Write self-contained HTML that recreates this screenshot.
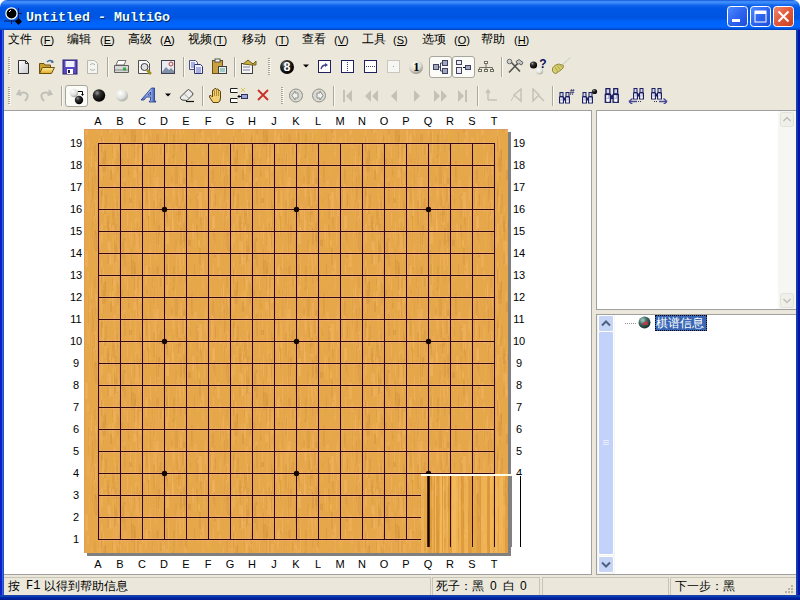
<!DOCTYPE html><html><head><meta charset="utf-8"><style>
*{margin:0;padding:0;box-sizing:border-box}
html,body{width:800px;height:600px;overflow:hidden;background:#fff;font-family:"Liberation Sans", sans-serif;}
.a{position:absolute}
#title{left:0;top:0;width:800px;height:30px;border-radius:7px 7px 0 0;
background:linear-gradient(to bottom,#0a3fc4 0px,#3d8cff 1px,#3a8af8 3px,#1466ee 5px,#0058e6 8px,#0054e0 18px,#0062f8 21px,#0066ff 27px,#0050da 29px,#003aa8 30px);}
#frame{left:0;top:30px;width:800px;height:570px;background:#0838c0;}
#client{left:4px;top:30px;width:792px;height:565px;background:#ebe8db;}
.menu{font-size:12px;color:#000;top:31px;line-height:16px;white-space:nowrap}
.lbl{font-size:11px;color:#000;line-height:14px;width:22px;text-align:center}
.rl{font-size:11px;color:#000;line-height:14px;width:30px}
.stat{font-size:12px;color:#000;line-height:14px;white-space:nowrap}
</style></head><body><svg width="0" height="0" style="position:absolute"><defs>
<radialGradient id="gb" cx="0.35" cy="0.3" r="0.7"><stop offset="0" stop-color="#9a9a9a"/><stop offset="0.35" stop-color="#303030"/><stop offset="1" stop-color="#000"/></radialGradient>
<radialGradient id="gw" cx="0.35" cy="0.3" r="0.75"><stop offset="0" stop-color="#fff"/><stop offset="0.6" stop-color="#e0e0dc"/><stop offset="1" stop-color="#a8a8a0"/></radialGradient>
<radialGradient id="gg" cx="0.4" cy="0.3" r="0.75"><stop offset="0" stop-color="#fafaf8"/><stop offset="0.6" stop-color="#dcdad0"/><stop offset="1" stop-color="#8c8a80"/></radialGradient>
<linearGradient id="minb" x1="0" y1="0" x2="1" y2="1"><stop offset="0" stop-color="#4f8cff"/><stop offset="0.5" stop-color="#2d65f0"/><stop offset="1" stop-color="#1d4cd8"/></linearGradient>
<linearGradient id="clsb" x1="0" y1="0" x2="1" y2="1"><stop offset="0" stop-color="#f08a70"/><stop offset="0.5" stop-color="#e2583a"/><stop offset="1" stop-color="#c84020"/></linearGradient>
<linearGradient id="fold" x1="0" y1="0" x2="0" y2="1"><stop offset="0" stop-color="#fff2a0"/><stop offset="1" stop-color="#e0a820"/></linearGradient>
<linearGradient id="pap" x1="0" y1="0" x2="1" y2="1"><stop offset="0" stop-color="#fff"/><stop offset="1" stop-color="#c8c8d0"/></linearGradient>
</defs></svg>
<div id="title" class="a"></div>
<div id="frame" class="a"></div>
<div class="a" style="left:0;top:30px;width:4px;height:570px;background:linear-gradient(to right,#0c1ec8 0,#0c1ec8 2px,#3464ee 2px,#3464ee 3px,#2050b8 3px)"></div>
<div class="a" style="left:796px;top:30px;width:4px;height:570px;background:linear-gradient(to right,#1c3ca8 0,#1c3ca8 1px,#0838b8 1px,#0838b8 2px,#0614a8 2px)"></div>
<div class="a" style="left:0;top:595px;width:800px;height:5px;background:linear-gradient(to bottom,#2040a8 0,#2040a8 1px,#0840b8 1px,#0840b8 2px,#0428a8 2px,#001c90 5px)"></div>
<div id="client" class="a"></div>
<svg class="a" style="left:0px;top:0px" width="26" height="28" viewBox="0 0 26 28"><line x1="4" y1="21" x2="21" y2="21" stroke="#0a1a50" stroke-width="1"/><line x1="11.5" y1="14" x2="11.5" y2="24" stroke="#0a1a50" stroke-width="1"/><line x1="18.5" y1="8" x2="18.5" y2="22" stroke="#0a1a50" stroke-width="1"/><line x1="12" y1="13.5" x2="22" y2="13.5" stroke="#0a1a50" stroke-width="1"/><circle cx="11.5" cy="13.5" r="5.6" fill="#000" stroke="#fff" stroke-width="1.2"/><line x1="9" y1="12" x2="11" y2="10" stroke="#fff" stroke-width="1"/><path d="M18.5 18 L22 21.5 L18.5 25 L15 21.5Z" fill="#000"/></svg>
<svg class="a" style="left:727px;top:6px" width="21" height="21" viewBox="0 0 21 21"><rect x="0.5" y="0.5" width="20" height="20" rx="3" fill="url(#minb)" stroke="#fff" stroke-width="1"/><rect x="5" y="13" width="8" height="3" fill="#fff"/></svg><svg class="a" style="left:750px;top:6px" width="21" height="21" viewBox="0 0 21 21"><rect x="0.5" y="0.5" width="20" height="20" rx="3" fill="url(#minb)" stroke="#fff" stroke-width="1"/><rect x="5" y="5" width="11" height="11" fill="none" stroke="#fff" stroke-width="1"/><rect x="5" y="5" width="11" height="3" fill="#fff"/></svg><svg class="a" style="left:773px;top:6px" width="21" height="21" viewBox="0 0 21 21"><rect x="0.5" y="0.5" width="20" height="20" rx="3" fill="url(#clsb)" stroke="#fff" stroke-width="1"/><path d="M5.5 5.5 L15.5 15.5 M15.5 5.5 L5.5 15.5" stroke="#fff" stroke-width="2"/></svg>
<div class="a" style="left:27px;top:11px;font:bold 13.33px 'Liberation Mono',monospace;color:#08205a;white-space:nowrap">Untitled - MultiGo</div>
<div class="a" style="left:26px;top:10px;font:bold 13.33px 'Liberation Mono',monospace;color:#e8ffff;white-space:nowrap">Untitled - MultiGo</div>
<div class="a menu" style="left:8px">文件</div>
<div class="a menu" style="left:40px;font-size:11px;top:32px">(F)</div>
<div class="a" style="left:44px;top:45px;width:8px;height:1px;background:#000"></div>
<div class="a menu" style="left:67px">编辑</div>
<div class="a menu" style="left:100px;font-size:11px;top:32px">(E)</div>
<div class="a" style="left:104px;top:45px;width:8px;height:1px;background:#000"></div>
<div class="a menu" style="left:128px">高级</div>
<div class="a menu" style="left:160px;font-size:11px;top:32px">(A)</div>
<div class="a" style="left:164px;top:45px;width:8px;height:1px;background:#000"></div>
<div class="a menu" style="left:188px">视频</div>
<div class="a menu" style="left:213px;font-size:11px;top:32px">(T)</div>
<div class="a" style="left:217px;top:45px;width:8px;height:1px;background:#000"></div>
<div class="a menu" style="left:242px">移动</div>
<div class="a menu" style="left:275px;font-size:11px;top:32px">(T)</div>
<div class="a" style="left:279px;top:45px;width:8px;height:1px;background:#000"></div>
<div class="a menu" style="left:302px">查看</div>
<div class="a menu" style="left:334px;font-size:11px;top:32px">(V)</div>
<div class="a" style="left:338px;top:45px;width:8px;height:1px;background:#000"></div>
<div class="a menu" style="left:362px">工具</div>
<div class="a menu" style="left:393px;font-size:11px;top:32px">(S)</div>
<div class="a" style="left:397px;top:45px;width:8px;height:1px;background:#000"></div>
<div class="a menu" style="left:422px">选项</div>
<div class="a menu" style="left:454px;font-size:11px;top:32px">(O)</div>
<div class="a" style="left:458px;top:45px;width:8px;height:1px;background:#000"></div>
<div class="a menu" style="left:481px">帮助</div>
<div class="a menu" style="left:514px;font-size:11px;top:32px">(H)</div>
<div class="a" style="left:518px;top:45px;width:8px;height:1px;background:#000"></div>
<svg class="a" style="left:8px;top:57px" width="3" height="18" viewBox="0 0 3 18"><rect x="0" y="0" width="2" height="1" fill="#a8a490"/><rect x="1" y="1" width="2" height="1" fill="#fff"/><rect x="0" y="2" width="2" height="1" fill="#a8a490"/><rect x="1" y="3" width="2" height="1" fill="#fff"/><rect x="0" y="4" width="2" height="1" fill="#a8a490"/><rect x="1" y="5" width="2" height="1" fill="#fff"/><rect x="0" y="6" width="2" height="1" fill="#a8a490"/><rect x="1" y="7" width="2" height="1" fill="#fff"/><rect x="0" y="8" width="2" height="1" fill="#a8a490"/><rect x="1" y="9" width="2" height="1" fill="#fff"/><rect x="0" y="10" width="2" height="1" fill="#a8a490"/><rect x="1" y="11" width="2" height="1" fill="#fff"/><rect x="0" y="12" width="2" height="1" fill="#a8a490"/><rect x="1" y="13" width="2" height="1" fill="#fff"/><rect x="0" y="14" width="2" height="1" fill="#a8a490"/><rect x="1" y="15" width="2" height="1" fill="#fff"/><rect x="0" y="16" width="2" height="1" fill="#a8a490"/><rect x="1" y="17" width="2" height="1" fill="#fff"/></svg><svg class="a" style="left:17px;top:59px" width="14" height="16" viewBox="0 0 14 16"><path d="M1.5 1.5 H8.5 L11.5 4.5 V14.5 H1.5Z" fill="url(#pap)" stroke="#303030"/><path d="M8.5 1.5 V4.5 H11.5" fill="none" stroke="#303030"/></svg><svg class="a" style="left:38px;top:59px" width="18" height="16" viewBox="0 0 18 16"><path d="M1.5 4.5 H6 L7 6 H12.5 V14.5 H1.5Z" fill="#c8a030" stroke="#705010"/><path d="M1.5 14.5 L4.5 8.5 H16.5 L13.5 14.5Z" fill="url(#fold)" stroke="#705010"/><path d="M9 3 Q12 0 15 3" fill="none" stroke="#3a6a90" stroke-width="1.2"/><path d="M14 1 L16 3.5 L13 4Z" fill="#3a6a90"/></svg><svg class="a" style="left:62px;top:59px" width="16" height="16" viewBox="0 0 16 16"><rect x="1" y="1" width="14" height="14" fill="#5a48c0" stroke="#2a2070"/><rect x="3.5" y="2" width="9" height="6" fill="#f0f0f8"/><rect x="5" y="10" width="6" height="5" fill="#fff"/><rect x="6" y="11" width="2" height="3" fill="#201850"/></svg><svg class="a" style="left:86px;top:59px" width="13" height="16" viewBox="0 0 13 16"><path d="M1.5 1.5 H8.5 L11.5 4.5 V14.5 H1.5Z" fill="#f4f4f0" stroke="#b8b8b0"/><path d="M4 6 A3 3 0 0 1 9 6 M9 10 A3 3 0 0 1 4 10" fill="none" stroke="#b0b0a8"/></svg><div class="a" style="left:107px;top:57px;width:1px;height:20px;background:#aca899"></div><div class="a" style="left:108px;top:57px;width:1px;height:20px;background:#fafaf6"></div><svg class="a" style="left:113px;top:59px" width="17" height="16" viewBox="0 0 17 16"><path d="M5 1.5 H13 L11 6 H3Z" fill="#fff" stroke="#707070"/><path d="M1.5 6.5 H15.5 V13.5 H1.5Z" fill="#d8d8d8" stroke="#606060"/><rect x="2" y="10" width="13" height="2" fill="#b0b0b0"/><rect x="10" y="8.5" width="3" height="3" fill="#30b040"/></svg><svg class="a" style="left:137px;top:59px" width="17" height="16" viewBox="0 0 17 16"><path d="M1.5 1.5 H9.5 L12.5 4.5 V14.5 H1.5Z" fill="#f8f8f8" stroke="#505050"/><circle cx="7.5" cy="8" r="3.5" fill="#e0e0e0" stroke="#404040"/><path d="M10 11 L14 15" stroke="#a09020" stroke-width="2.5"/></svg><svg class="a" style="left:160px;top:59px" width="16" height="16" viewBox="0 0 16 16"><rect x="1.5" y="1.5" width="13" height="13" fill="#e8ecf0" stroke="#404050"/><path d="M2 13 L6 8 L9 11 L11 9 L14 12 V14 H2Z" fill="#8090a8"/><circle cx="11" cy="5" r="2" fill="none" stroke="#c04040"/></svg><div class="a" style="left:183px;top:57px;width:1px;height:20px;background:#aca899"></div><div class="a" style="left:184px;top:57px;width:1px;height:20px;background:#fafaf6"></div><svg class="a" style="left:188px;top:59px" width="17" height="16" viewBox="0 0 17 16"><path d="M1.5 1.5 H7.5 L9.5 3.5 V10.5 H1.5Z" fill="#f0f0ff" stroke="#505080"/><path d="M6.5 5.5 H12.5 L14.5 7.5 V14.5 H6.5Z" fill="#f0f0ff" stroke="#303070"/><path d="M8 9 H13 M8 11 H13 M8 13 H13" stroke="#6070c0"/><path d="M3 4 H7 M3 6 H7 M3 8 H6" stroke="#6070c0"/></svg><svg class="a" style="left:211px;top:58px" width="18" height="17" viewBox="0 0 18 17"><rect x="1.5" y="2.5" width="10" height="13" fill="#c8a040" stroke="#6a5020"/><rect x="4" y="1" width="5" height="3" fill="#fff" stroke="#505050"/><rect x="7.5" y="8.5" width="8" height="7" fill="#e0f0e8" stroke="#404040"/><path d="M9 11 H14 M9 13 H14" stroke="#60a0a0"/></svg><div class="a" style="left:234px;top:57px;width:1px;height:20px;background:#aca899"></div><div class="a" style="left:235px;top:57px;width:1px;height:20px;background:#fafaf6"></div><svg class="a" style="left:240px;top:58px" width="17" height="17" viewBox="0 0 17 17"><rect x="1.5" y="5.5" width="11" height="10" fill="#f4f4f4" stroke="#404040"/><path d="M3 9 H10 M3 12 H10" stroke="#8080a0"/><path d="M3 6 L8 2 L13 6 L16 3 V7 H12Z" fill="#c8b040" stroke="#706020"/></svg><svg class="a" style="left:268px;top:58px" width="3" height="17" viewBox="0 0 3 17"><rect x="0" y="0" width="2" height="1" fill="#a8a490"/><rect x="1" y="1" width="2" height="1" fill="#fff"/><rect x="0" y="2" width="2" height="1" fill="#a8a490"/><rect x="1" y="3" width="2" height="1" fill="#fff"/><rect x="0" y="4" width="2" height="1" fill="#a8a490"/><rect x="1" y="5" width="2" height="1" fill="#fff"/><rect x="0" y="6" width="2" height="1" fill="#a8a490"/><rect x="1" y="7" width="2" height="1" fill="#fff"/><rect x="0" y="8" width="2" height="1" fill="#a8a490"/><rect x="1" y="9" width="2" height="1" fill="#fff"/><rect x="0" y="10" width="2" height="1" fill="#a8a490"/><rect x="1" y="11" width="2" height="1" fill="#fff"/><rect x="0" y="12" width="2" height="1" fill="#a8a490"/><rect x="1" y="13" width="2" height="1" fill="#fff"/><rect x="0" y="14" width="2" height="1" fill="#a8a490"/><rect x="1" y="15" width="2" height="1" fill="#fff"/><rect x="0" y="16" width="2" height="1" fill="#a8a490"/><rect x="1" y="17" width="2" height="1" fill="#fff"/></svg><svg class="a" style="left:279px;top:59px" width="16" height="16" viewBox="0 0 16 16"><circle cx="8" cy="8" r="7" fill="url(#gb)"/><text x="8" y="12.3" font-family="Liberation Sans" font-weight="bold" font-size="12.5" fill="#fff" text-anchor="middle">8</text></svg><svg class="a" style="left:303px;top:64px" width="7" height="5" viewBox="0 0 7 5"><path d="M0 0.5 H6 L3 3.5Z" fill="#000"/></svg><svg class="a" style="left:317px;top:59px" width="15" height="16" viewBox="0 0 15 16"><rect x="1.5" y="1.5" width="12" height="12" fill="#fff" stroke="#202060"/><path d="M4 10 Q5 6 9 6" fill="none" stroke="#404090" stroke-width="1.3"/><path d="M8 4 L11 6 L8 8Z" fill="#404090"/></svg><svg class="a" style="left:340px;top:59px" width="15" height="16" viewBox="0 0 15 16"><rect x="1.5" y="1.5" width="12" height="12" fill="#fff" stroke="#202060"/><path d="M7.5 3 V12" stroke="#404070" stroke-dasharray="1 1"/></svg><svg class="a" style="left:363px;top:59px" width="15" height="16" viewBox="0 0 15 16"><rect x="1.5" y="1.5" width="12" height="12" fill="#fff" stroke="#202060"/><path d="M3 7.5 H12" stroke="#404070" stroke-dasharray="1 1"/></svg><svg class="a" style="left:386px;top:59px" width="15" height="16" viewBox="0 0 15 16"><rect x="1.5" y="1.5" width="12" height="12" fill="#f6f6f2" stroke="#c8c8c0"/><rect x="7" y="7" width="1" height="1" fill="#a0a0a0"/></svg><svg class="a" style="left:408px;top:59px" width="16" height="16" viewBox="0 0 16 16"><circle cx="8" cy="8" r="7" fill="url(#gg)"/><text x="8.3" y="12" font-family="Liberation Serif" font-weight="bold" font-size="12.5" fill="#000" text-anchor="middle">1</text></svg><div class="a" style="left:429px;top:56px;width:23px;height:22px;border:1px solid #a8a69a;border-radius:3px;background:#fbfbf8"></div><div class="a" style="left:452px;top:56px;width:23px;height:22px;border:1px solid #a8a69a;border-radius:3px;background:#fbfbf8"></div><svg class="a" style="left:432px;top:59px" width="17" height="16" viewBox="0 0 17 16"><rect x="1.5" y="5.5" width="5" height="5" fill="#a0a8c0" stroke="#404060"/><rect x="10.5" y="1.5" width="5" height="5" fill="#a0a8c0" stroke="#404060"/><rect x="10.5" y="9.5" width="5" height="5" fill="#a0a8c0" stroke="#404060"/><path d="M6.5 8 H8.5 V4 H10.5 M8.5 8 V12 H10.5" fill="none" stroke="#404060"/></svg><svg class="a" style="left:455px;top:59px" width="17" height="16" viewBox="0 0 17 16"><rect x="1.5" y="1.5" width="5" height="4" fill="#e8e8f0" stroke="#404060"/><rect x="1.5" y="8.5" width="5" height="6" fill="#e8e8f0" stroke="#404060"/><rect x="10.5" y="6.5" width="5" height="4" fill="#a0a8c0" stroke="#404060"/><path d="M8 8.5 H10" stroke="#000"/></svg><svg class="a" style="left:477px;top:59px" width="18" height="16" viewBox="0 0 18 16"><rect x="7.5" y="2.5" width="3" height="2" fill="#fff" stroke="#707060"/><path d="M9 5 V8 M2.5 8.5 H15.5 M2.5 8.5 V10 M9 8.5 V10 M15.5 8.5 V10" fill="none" stroke="#707060"/><rect x="1.5" y="10.5" width="3" height="2" fill="#fff" stroke="#707060"/><rect x="7.5" y="10.5" width="3" height="2" fill="#fff" stroke="#707060"/><rect x="13.5" y="10.5" width="3" height="2" fill="#fff" stroke="#707060"/></svg><div class="a" style="left:501px;top:57px;width:1px;height:20px;background:#aca899"></div><div class="a" style="left:502px;top:57px;width:1px;height:20px;background:#fafaf6"></div><svg class="a" style="left:506px;top:58px" width="18" height="16" viewBox="0 0 18 16"><path d="M3 14.5 L13 4" stroke="#505050" stroke-width="1.6"/><path d="M4 3 L14 13.5" stroke="#505050" stroke-width="1.6"/><circle cx="3.5" cy="3.5" r="2.3" fill="#d0d0d0" stroke="#505050" stroke-width="0.8"/><path d="M10 3.5 L13 1.5 L17 4.5 L15.5 7 L13 5.5 L12 6.5Z" fill="#c8c8c8" stroke="#404040" stroke-width="0.8"/></svg><svg class="a" style="left:528px;top:57px" width="19" height="18" viewBox="0 0 19 18"><circle cx="5.5" cy="8" r="3.6" fill="url(#gb)"/><circle cx="11.5" cy="14" r="3.6" fill="url(#gw)"/><text x="15" y="10.5" font-family="Liberation Sans" font-weight="bold" font-size="12" fill="#0c0c60" text-anchor="middle">?</text></svg><svg class="a" style="left:551px;top:56px" width="21" height="19" viewBox="0 0 21 19"><path d="M11 9 L19.5 1.5" stroke="#e8e8e0" stroke-width="2.2"/><path d="M11 9 L19.5 1.5" stroke="#b0b0a0" stroke-width="0.6"/><path d="M1.5 12 Q4 8 8 8 L12.5 9.5 Q13 12 10 14 L5 17.5 Q2.5 17.5 1.5 15Z" fill="#d8d070" stroke="#807830" stroke-width="0.8"/><path d="M4 11 L7 16 M6 9.5 L9.5 14 M8.5 9 L11.5 12" stroke="#a09838" stroke-width="0.8"/></svg>
<svg class="a" style="left:8px;top:87px" width="3" height="18" viewBox="0 0 3 18"><rect x="0" y="0" width="2" height="1" fill="#a8a490"/><rect x="1" y="1" width="2" height="1" fill="#fff"/><rect x="0" y="2" width="2" height="1" fill="#a8a490"/><rect x="1" y="3" width="2" height="1" fill="#fff"/><rect x="0" y="4" width="2" height="1" fill="#a8a490"/><rect x="1" y="5" width="2" height="1" fill="#fff"/><rect x="0" y="6" width="2" height="1" fill="#a8a490"/><rect x="1" y="7" width="2" height="1" fill="#fff"/><rect x="0" y="8" width="2" height="1" fill="#a8a490"/><rect x="1" y="9" width="2" height="1" fill="#fff"/><rect x="0" y="10" width="2" height="1" fill="#a8a490"/><rect x="1" y="11" width="2" height="1" fill="#fff"/><rect x="0" y="12" width="2" height="1" fill="#a8a490"/><rect x="1" y="13" width="2" height="1" fill="#fff"/><rect x="0" y="14" width="2" height="1" fill="#a8a490"/><rect x="1" y="15" width="2" height="1" fill="#fff"/><rect x="0" y="16" width="2" height="1" fill="#a8a490"/><rect x="1" y="17" width="2" height="1" fill="#fff"/></svg><svg class="a" style="left:16px;top:88px" width="15" height="15" viewBox="0 0 15 15"><path d="M4 2 L1.5 6 L5.5 7 M2.5 6 Q8 3 11 6 Q13 9 9 13" fill="none" stroke="#c0c0b8" stroke-width="2"/></svg><svg class="a" style="left:38px;top:88px" width="15" height="15" viewBox="0 0 15 15"><path d="M11 2 L13.5 6 L9.5 7 M12.5 6 Q7 3 4 6 Q2 9 6 13" fill="none" stroke="#c0c0b8" stroke-width="2"/></svg><div class="a" style="left:61px;top:86px;width:1px;height:20px;background:#aca899"></div><div class="a" style="left:62px;top:86px;width:1px;height:20px;background:#fafaf6"></div><div class="a" style="left:65px;top:85px;width:23px;height:22px;border:1px solid #a8a69a;border-radius:3px;background:#fbfbf8"></div><svg class="a" style="left:67px;top:87px" width="19" height="18" viewBox="0 0 19 18"><circle cx="7" cy="6" r="4.2" fill="url(#gw)"/><circle cx="12" cy="13" r="4.2" fill="url(#gb)"/><path d="M11 4.5 H15.5 V8" fill="none" stroke="#000"/><path d="M14 7 L15.5 9 L17 7Z" fill="#000"/></svg><svg class="a" style="left:91px;top:88px" width="16" height="15" viewBox="0 0 16 15"><circle cx="8" cy="7.5" r="6.2" fill="url(#gb)"/></svg><svg class="a" style="left:114px;top:88px" width="16" height="15" viewBox="0 0 16 15"><circle cx="8" cy="7.5" r="6" fill="url(#gw)"/></svg><svg class="a" style="left:140px;top:87px" width="18" height="17" viewBox="0 0 18 17"><defs><linearGradient id="ag" x1="0" y1="0" x2="1" y2="0"><stop offset="0" stop-color="#5070d0"/><stop offset="0.6" stop-color="#a0b8f8"/><stop offset="1" stop-color="#2040a0"/></linearGradient></defs><path d="M1 13 L4 13 L6.5 10 H10.5 V13 L9 15 H16 L14.5 13 V1 H11.5 Z M8 8 L10.5 5 V8Z" fill="url(#ag)" stroke="#203880" stroke-width="0.8" fill-rule="evenodd"/></svg><svg class="a" style="left:165px;top:93px" width="7" height="5" viewBox="0 0 7 5"><path d="M0 0.5 H6 L3 3.5Z" fill="#000"/></svg><svg class="a" style="left:179px;top:88px" width="17" height="15" viewBox="0 0 17 15"><path d="M3 12 L1.5 10.5 Q1 9.5 2 8.5 L8.5 2 Q9.5 1 10.5 2 L13.5 5 Q14.5 6 13.5 7 L8 12.5 Z" fill="#ececec" stroke="#404040" stroke-width="1"/><path d="M5 5.5 L10 10.5" stroke="#a0a0a0"/><path d="M7 13.5 H15" stroke="#101010" stroke-width="1.2"/></svg><div class="a" style="left:202px;top:86px;width:1px;height:20px;background:#aca899"></div><div class="a" style="left:203px;top:86px;width:1px;height:20px;background:#fafaf6"></div><svg class="a" style="left:208px;top:87px" width="17" height="17" viewBox="0 0 17 17"><path d="M5 15.5 L1.5 10 Q1 8 3 8.5 L4.5 10 V4 Q4.5 2.5 6 3 V2.5 Q6.5 1 8 1.5 L8.5 2.5 Q9.5 1.5 10.5 2.5 V3.5 Q12 3 12.5 4.5 V11 Q12.5 15 10 15.5Z" fill="#f0d070" stroke="#604010" stroke-width="1"/><path d="M6.5 3.5 V9 M8.5 2.5 V9 M10.5 3.5 V9" stroke="#a07820" stroke-width="0.8"/></svg><svg class="a" style="left:229px;top:87px" width="20" height="17" viewBox="0 0 20 17"><path d="M8.5 1.5 H1.5 V5.5 H8.5" fill="none" stroke="#202020"/><path d="M8.5 11.5 H1.5 V15.5 H8.5" fill="none" stroke="#202020"/><rect x="2" y="2" width="6" height="3" fill="#fff"/><rect x="2" y="12" width="6" height="3" fill="#fff"/><rect x="12.5" y="7.5" width="6" height="4" fill="#98a8d8" stroke="#303060"/><path d="M9 9.5 H12" stroke="#000"/><path d="M9 9.5 L10.5 8 M9 9.5 L10.5 11" stroke="#000"/><path d="M12 1 L14 3 M16 1 L14 3 M12 5 L14 3 M16 5 L14 3" stroke="#d8c860" stroke-width="1"/></svg><svg class="a" style="left:256px;top:88px" width="14" height="14" viewBox="0 0 14 14"><path d="M2 2 L12 12 M12 2 L2 12" stroke="#c83028" stroke-width="1.8"/></svg><svg class="a" style="left:281px;top:87px" width="3" height="17" viewBox="0 0 3 17"><rect x="0" y="0" width="2" height="1" fill="#a8a490"/><rect x="1" y="1" width="2" height="1" fill="#fff"/><rect x="0" y="2" width="2" height="1" fill="#a8a490"/><rect x="1" y="3" width="2" height="1" fill="#fff"/><rect x="0" y="4" width="2" height="1" fill="#a8a490"/><rect x="1" y="5" width="2" height="1" fill="#fff"/><rect x="0" y="6" width="2" height="1" fill="#a8a490"/><rect x="1" y="7" width="2" height="1" fill="#fff"/><rect x="0" y="8" width="2" height="1" fill="#a8a490"/><rect x="1" y="9" width="2" height="1" fill="#fff"/><rect x="0" y="10" width="2" height="1" fill="#a8a490"/><rect x="1" y="11" width="2" height="1" fill="#fff"/><rect x="0" y="12" width="2" height="1" fill="#a8a490"/><rect x="1" y="13" width="2" height="1" fill="#fff"/><rect x="0" y="14" width="2" height="1" fill="#a8a490"/><rect x="1" y="15" width="2" height="1" fill="#fff"/><rect x="0" y="16" width="2" height="1" fill="#a8a490"/><rect x="1" y="17" width="2" height="1" fill="#fff"/></svg><svg class="a" style="left:288px;top:88px" width="16" height="15" viewBox="0 0 16 15"><circle cx="8" cy="7.5" r="6.5" fill="#d8d8d4" stroke="#909088"/><path d="M10 5 H7 V3 L4 7.5 L7 12 V10 H10Z" fill="#f0f0ec" stroke="#909088"/></svg><svg class="a" style="left:311px;top:88px" width="16" height="15" viewBox="0 0 16 15"><circle cx="8" cy="7.5" r="6.5" fill="#d8d8d4" stroke="#909088"/><path d="M6 5 H9 V3 L12 7.5 L9 12 V10 H6Z" fill="#f0f0ec" stroke="#909088"/></svg><div class="a" style="left:333px;top:86px;width:1px;height:20px;background:#aca899"></div><div class="a" style="left:334px;top:86px;width:1px;height:20px;background:#fafaf6"></div><svg class="a" style="left:342px;top:89px" width="11" height="14" viewBox="0 0 11 14"><rect x="1" y="1" width="2" height="12" fill="#c4c2b6"/><path d="M10 1 L4 7 L10 13Z" fill="#c4c2b6"/></svg><svg class="a" style="left:364px;top:89px" width="15" height="14" viewBox="0 0 15 14"><path d="M7 1 L1 7 L7 13Z M14 1 L8 7 L14 13Z" fill="#c4c2b6"/></svg><svg class="a" style="left:390px;top:89px" width="8" height="14" viewBox="0 0 8 14"><path d="M7 1 L1 7 L7 13Z" fill="#c4c2b6"/></svg><svg class="a" style="left:413px;top:89px" width="8" height="14" viewBox="0 0 8 14"><path d="M1 1 L7 7 L1 13Z" fill="#c4c2b6"/></svg><svg class="a" style="left:433px;top:89px" width="15" height="14" viewBox="0 0 15 14"><path d="M1 1 L7 7 L1 13Z M8 1 L14 7 L8 13Z" fill="#c4c2b6"/></svg><svg class="a" style="left:457px;top:89px" width="12" height="14" viewBox="0 0 12 14"><path d="M1 1 L7 7 L1 13Z" fill="#c4c2b6"/><rect x="8" y="1" width="2" height="12" fill="#c4c2b6"/></svg><div class="a" style="left:477px;top:86px;width:1px;height:20px;background:#aca899"></div><div class="a" style="left:478px;top:86px;width:1px;height:20px;background:#fafaf6"></div><svg class="a" style="left:485px;top:88px" width="14" height="15" viewBox="0 0 14 15"><path d="M3 12 V3 M1 5 L3 2 L5 5 M3 12 H12" fill="none" stroke="#c4c2b6" stroke-width="1.5"/></svg><svg class="a" style="left:509px;top:88px" width="14" height="15" viewBox="0 0 14 15"><path d="M12 1 L5 7 L12 13Z" fill="none" stroke="#c4c2b6" stroke-width="1.5"/><path d="M5 8 L2 13" stroke="#c4c2b6"/></svg><svg class="a" style="left:531px;top:88px" width="15" height="15" viewBox="0 0 15 15"><path d="M2 1 L8 7 L2 13Z" fill="none" stroke="#c4c2b6" stroke-width="1.5"/><path d="M8 8 L13 13" stroke="#c4c2b6" stroke-width="1.5"/></svg><div class="a" style="left:552px;top:86px;width:1px;height:20px;background:#aca899"></div><div class="a" style="left:553px;top:86px;width:1px;height:20px;background:#fafaf6"></div><svg class="a" style="left:558px;top:88px" width="18" height="16" viewBox="0 0 18 16"><g transform="translate(1,4.5)"><rect x="1" y="0" width="3" height="4" fill="#d0d4e8" stroke="#1c2060" stroke-width="1"/><rect x="7" y="0" width="3" height="4" fill="#d0d4e8" stroke="#1c2060" stroke-width="1"/><rect x="0.5" y="4.5" width="4" height="6" fill="#b8bcd8" stroke="#1c2060"/><rect x="6.5" y="4.5" width="4" height="6" fill="#b8bcd8" stroke="#1c2060"/><rect x="1.5" y="8" width="2" height="2" fill="#fff"/><rect x="7.5" y="8" width="2" height="2" fill="#fff"/><rect x="1.5" y="5" width="1" height="2" fill="#fff"/><rect x="7.5" y="5" width="1" height="2" fill="#fff"/><rect x="4.5" y="5" width="2" height="3" fill="#1c2060"/></g><text x="14" y="7" font-family="Liberation Sans" font-weight="bold" font-size="9" fill="#1c2060" text-anchor="middle">#</text></svg><svg class="a" style="left:581px;top:88px" width="18" height="16" viewBox="0 0 18 16"><g transform="translate(1,4.5)"><rect x="1" y="0" width="3" height="4" fill="#d0d4e8" stroke="#1c2060" stroke-width="1"/><rect x="7" y="0" width="3" height="4" fill="#d0d4e8" stroke="#1c2060" stroke-width="1"/><rect x="0.5" y="4.5" width="4" height="6" fill="#b8bcd8" stroke="#1c2060"/><rect x="6.5" y="4.5" width="4" height="6" fill="#b8bcd8" stroke="#1c2060"/><rect x="1.5" y="8" width="2" height="2" fill="#fff"/><rect x="7.5" y="8" width="2" height="2" fill="#fff"/><rect x="1.5" y="5" width="1" height="2" fill="#fff"/><rect x="7.5" y="5" width="1" height="2" fill="#fff"/><rect x="4.5" y="5" width="2" height="3" fill="#1c2060"/></g><circle cx="13.5" cy="3.5" r="2.6" fill="url(#gb)"/></svg><svg class="a" style="left:604px;top:88px" width="18" height="16" viewBox="0 0 18 16"><g transform="scale(1.3)"><g transform="translate(0.5,0.5)"><rect x="1" y="0" width="3" height="4" fill="#d0d4e8" stroke="#1c2060" stroke-width="1"/><rect x="7" y="0" width="3" height="4" fill="#d0d4e8" stroke="#1c2060" stroke-width="1"/><rect x="0.5" y="4.5" width="4" height="6" fill="#b8bcd8" stroke="#1c2060"/><rect x="6.5" y="4.5" width="4" height="6" fill="#b8bcd8" stroke="#1c2060"/><rect x="1.5" y="8" width="2" height="2" fill="#fff"/><rect x="7.5" y="8" width="2" height="2" fill="#fff"/><rect x="1.5" y="5" width="1" height="2" fill="#fff"/><rect x="7.5" y="5" width="1" height="2" fill="#fff"/><rect x="4.5" y="5" width="2" height="3" fill="#1c2060"/></g></g></svg><svg class="a" style="left:628px;top:86px" width="18" height="18" viewBox="0 0 18 18"><g transform="translate(5,2.5)"><rect x="1" y="0" width="3" height="4" fill="#d0d4e8" stroke="#1c2060" stroke-width="1"/><rect x="7" y="0" width="3" height="4" fill="#d0d4e8" stroke="#1c2060" stroke-width="1"/><rect x="0.5" y="4.5" width="4" height="6" fill="#b8bcd8" stroke="#1c2060"/><rect x="6.5" y="4.5" width="4" height="6" fill="#b8bcd8" stroke="#1c2060"/><rect x="1.5" y="8" width="2" height="2" fill="#fff"/><rect x="7.5" y="8" width="2" height="2" fill="#fff"/><rect x="1.5" y="5" width="1" height="2" fill="#fff"/><rect x="7.5" y="5" width="1" height="2" fill="#fff"/><rect x="4.5" y="5" width="2" height="3" fill="#1c2060"/></g><path d="M2 15.5 H9" stroke="#4a4a9a" stroke-width="1.5"/><path d="M1 15.5 L4.5 12.5 M1 15.5 L4.5 18.5" stroke="#4a4a9a" stroke-width="1.5"/><rect x="10" y="15" width="1" height="1" fill="#303050"/><rect x="12" y="15" width="1" height="1" fill="#303050"/></svg><svg class="a" style="left:650px;top:86px" width="18" height="18" viewBox="0 0 18 18"><g transform="translate(1,2.5)"><rect x="1" y="0" width="3" height="4" fill="#d0d4e8" stroke="#1c2060" stroke-width="1"/><rect x="7" y="0" width="3" height="4" fill="#d0d4e8" stroke="#1c2060" stroke-width="1"/><rect x="0.5" y="4.5" width="4" height="6" fill="#b8bcd8" stroke="#1c2060"/><rect x="6.5" y="4.5" width="4" height="6" fill="#b8bcd8" stroke="#1c2060"/><rect x="1.5" y="8" width="2" height="2" fill="#fff"/><rect x="7.5" y="8" width="2" height="2" fill="#fff"/><rect x="1.5" y="5" width="1" height="2" fill="#fff"/><rect x="7.5" y="5" width="1" height="2" fill="#fff"/><rect x="4.5" y="5" width="2" height="3" fill="#1c2060"/></g><path d="M9 15.5 H16" stroke="#4a4a9a" stroke-width="1.5"/><path d="M17 15.5 L13.5 12.5 M17 15.5 L13.5 18.5" stroke="#4a4a9a" stroke-width="1.5"/><rect x="4" y="15" width="1" height="1" fill="#303050"/><rect x="6" y="15" width="1" height="1" fill="#303050"/></svg>
<div class="a" style="left:4px;top:110px;width:588px;height:465px;background:#fff;border-top:1px solid #a0a0a0;border-right:1px solid #a0a0a0;border-bottom:1px solid #a0a0a0"></div>
<div class="a" style="left:596px;top:110px;width:200px;height:200px;background:#fff;border:1px solid #a0a0a0;border-right:0"></div>
<div class="a" style="left:596px;top:314px;width:200px;height:261px;background:#fff;border:1px solid #a0a0a0;border-right:0"></div>
<div class="a" style="left:778px;top:111px;width:18px;height:198px;background:#f6f6f2"></div>
<svg class="a" style="left:779px;top:111px" width="16" height="17" viewBox="0 0 16 17"><rect x="1.5" y="1.5" width="13" height="14" rx="2" fill="#f0f0ea" stroke="#e2e2da"/><path d="M4.5 10 L8 6.5 L11.5 10" fill="none" stroke="#c0c0b8" stroke-width="1.5"/></svg>
<svg class="a" style="left:779px;top:292px" width="16" height="17" viewBox="0 0 16 17"><rect x="1.5" y="1.5" width="13" height="14" rx="2" fill="#f0f0ea" stroke="#e2e2da"/><path d="M4.5 7 L8 10.5 L11.5 7" fill="none" stroke="#c0c0b8" stroke-width="1.5"/></svg>
<div class="a" style="left:597px;top:315px;width:18px;height:259px;background:#f4f4f0"></div>
<svg class="a" style="left:598px;top:315px" width="16" height="17" viewBox="0 0 16 17"><rect x="0.5" y="0.5" width="15" height="16" rx="1.5" fill="#c6d4f6" stroke="#fff"/><path d="M4 10.5 L8 6.5 L12 10.5" fill="none" stroke="#4d6185" stroke-width="2"/></svg>
<svg class="a" style="left:598px;top:331px" width="16" height="225" viewBox="0 0 16 225"><rect x="0.5" y="0.5" width="15" height="223" rx="1.5" fill="#c2d2fa" stroke="#fff"/><path d="M5 109.5 H11 M5 111.5 H11 M5 113.5 H11" stroke="#e8eefc"/></svg>
<svg class="a" style="left:598px;top:556px" width="16" height="18" viewBox="0 0 16 18"><rect x="0.5" y="0.5" width="15" height="16" rx="1.5" fill="#c6d4f6" stroke="#fff"/><path d="M4 6.5 L8 10.5 L12 6.5" fill="none" stroke="#4d6185" stroke-width="2"/></svg>
<svg class="a" style="left:624px;top:315px" width="30" height="16" viewBox="0 0 30 16"><defs><radialGradient id="tg" cx="0.35" cy="0.3" r="0.8"><stop offset="0" stop-color="#a8d0c8"/><stop offset="0.45" stop-color="#3a6660"/><stop offset="1" stop-color="#142424"/></radialGradient></defs><path d="M1 8.5 H12" stroke="#909090" stroke-dasharray="1 1"/><circle cx="20.5" cy="7.5" r="6" fill="url(#tg)"/><path d="M17.5 9.5 L23 5.5 L24 10Z" fill="#c83848"/></svg>
<div class="a" style="left:655px;top:315px;width:52px;height:16px;background:#3866b4;border:1px dotted #000"></div>
<div class="a stat" style="left:656px;top:316px;color:#fff;font-size:12px">棋谱信息</div>
<svg class="a" style="left:0;top:0" width="800" height="600"><defs><pattern id="wood" width="132" height="132" patternUnits="userSpaceOnUse" x="84" y="129"><rect width="132" height="132" fill="#e6a64a"/><rect x="115" y="119" width="3" height="17" fill="#d0903c" opacity="0.35"/><rect x="115" y="-13" width="3" height="17" fill="#d0903c" opacity="0.35"/><rect x="47" y="131" width="3" height="18" fill="#d0903c" opacity="0.4"/><rect x="47" y="-1" width="3" height="18" fill="#d0903c" opacity="0.4"/><rect x="24" y="77" width="1" height="7" fill="#f2b462" opacity="0.53"/><rect x="10" y="101" width="2" height="17" fill="#d0903c" opacity="0.35"/><rect x="40" y="3" width="2" height="19" fill="#f2b462" opacity="0.26"/><rect x="61" y="7" width="2" height="17" fill="#f2b462" opacity="0.46"/><rect x="50" y="59" width="2" height="23" fill="#f2b462" opacity="0.25"/><rect x="21" y="71" width="1" height="16" fill="#e4b040" opacity="0.6"/><rect x="21" y="65" width="2" height="13" fill="#d0903c" opacity="0.33"/><rect x="7" y="27" width="1" height="15" fill="#f2b462" opacity="0.35"/><rect x="17" y="0" width="1" height="9" fill="#f2b462" opacity="0.57"/><rect x="120" y="101" width="1" height="16" fill="#f2b462" opacity="0.47"/><rect x="69" y="22" width="1" height="12" fill="#f2b462" opacity="0.59"/><rect x="30" y="63" width="1" height="25" fill="#f2b462" opacity="0.27"/><rect x="124" y="48" width="1" height="17" fill="#d0903c" opacity="0.45"/><rect x="33" y="98" width="1" height="6" fill="#f2b462" opacity="0.6"/><rect x="0" y="77" width="1" height="3" fill="#f2b462" opacity="0.39"/><rect x="25" y="37" width="1" height="9" fill="#f2b462" opacity="0.25"/><rect x="84" y="75" width="3" height="15" fill="#f2b462" opacity="0.28"/><rect x="62" y="94" width="1" height="14" fill="#d0903c" opacity="0.23"/><rect x="123" y="34" width="3" height="15" fill="#f2b462" opacity="0.3"/><rect x="58" y="63" width="3" height="26" fill="#f2b462" opacity="0.51"/><rect x="50" y="99" width="2" height="18" fill="#d0903c" opacity="0.31"/><rect x="26" y="9" width="1" height="19" fill="#e4b040" opacity="0.37"/><rect x="100" y="107" width="1" height="22" fill="#d0903c" opacity="0.33"/><rect x="17" y="58" width="1" height="18" fill="#d0903c" opacity="0.41"/><rect x="18" y="54" width="1" height="9" fill="#d0903c" opacity="0.22"/><rect x="105" y="63" width="1" height="4" fill="#f2b462" opacity="0.35"/><rect x="33" y="92" width="1" height="7" fill="#e4b040" opacity="0.59"/><rect x="35" y="8" width="2" height="3" fill="#d0903c" opacity="0.29"/><rect x="79" y="5" width="1" height="22" fill="#d0903c" opacity="0.32"/><rect x="79" y="34" width="1" height="5" fill="#f2b462" opacity="0.44"/><rect x="11" y="33" width="2" height="13" fill="#f2b462" opacity="0.49"/><rect x="19" y="106" width="3" height="3" fill="#e4b040" opacity="0.47"/><rect x="97" y="3" width="1" height="22" fill="#f2b462" opacity="0.28"/><rect x="29" y="106" width="1" height="26" fill="#f2b462" opacity="0.58"/><rect x="117" y="118" width="1" height="20" fill="#f2b462" opacity="0.51"/><rect x="117" y="-14" width="1" height="20" fill="#f2b462" opacity="0.51"/><rect x="7" y="22" width="1" height="18" fill="#f2b462" opacity="0.59"/><rect x="28" y="124" width="1" height="11" fill="#e4b040" opacity="0.41"/><rect x="28" y="-8" width="1" height="11" fill="#e4b040" opacity="0.41"/><rect x="36" y="51" width="2" height="19" fill="#f2b462" opacity="0.57"/><rect x="113" y="61" width="1" height="13" fill="#f2b462" opacity="0.34"/><rect x="110" y="51" width="3" height="9" fill="#f2b462" opacity="0.45"/><rect x="81" y="34" width="1" height="7" fill="#d0903c" opacity="0.41"/><rect x="10" y="16" width="2" height="11" fill="#d0903c" opacity="0.23"/><rect x="120" y="54" width="1" height="16" fill="#f2b462" opacity="0.43"/><rect x="80" y="115" width="2" height="13" fill="#f2b462" opacity="0.26"/><rect x="10" y="71" width="2" height="21" fill="#f2b462" opacity="0.48"/><rect x="4" y="34" width="2" height="15" fill="#d0903c" opacity="0.21"/><rect x="68" y="36" width="1" height="4" fill="#e4b040" opacity="0.33"/><rect x="27" y="94" width="2" height="5" fill="#d0903c" opacity="0.25"/><rect x="121" y="45" width="1" height="25" fill="#f2b462" opacity="0.42"/><rect x="9" y="57" width="1" height="11" fill="#d0903c" opacity="0.33"/><rect x="128" y="40" width="2" height="15" fill="#d0903c" opacity="0.37"/><rect x="57" y="105" width="1" height="26" fill="#f2b462" opacity="0.41"/><rect x="50" y="1" width="2" height="15" fill="#d0903c" opacity="0.36"/><rect x="128" y="87" width="3" height="17" fill="#f2b462" opacity="0.59"/><rect x="25" y="31" width="2" height="9" fill="#f2b462" opacity="0.39"/><rect x="22" y="82" width="1" height="11" fill="#e4b040" opacity="0.56"/><rect x="89" y="21" width="2" height="4" fill="#f2b462" opacity="0.44"/><rect x="70" y="7" width="1" height="9" fill="#d0903c" opacity="0.22"/><rect x="8" y="85" width="1" height="24" fill="#d0903c" opacity="0.24"/><rect x="38" y="112" width="2" height="18" fill="#d0903c" opacity="0.37"/><rect x="56" y="74" width="1" height="26" fill="#d0903c" opacity="0.24"/><rect x="131" y="65" width="3" height="12" fill="#d0903c" opacity="0.44"/><rect x="53" y="36" width="1" height="20" fill="#d0903c" opacity="0.34"/><rect x="51" y="29" width="1" height="19" fill="#f2b462" opacity="0.38"/><rect x="11" y="102" width="2" height="20" fill="#d0903c" opacity="0.34"/><rect x="125" y="42" width="1" height="5" fill="#e4b040" opacity="0.44"/><rect x="103" y="63" width="1" height="18" fill="#d0903c" opacity="0.28"/><rect x="121" y="81" width="2" height="6" fill="#f2b462" opacity="0.47"/><rect x="66" y="5" width="1" height="4" fill="#f2b462" opacity="0.33"/><rect x="72" y="90" width="1" height="10" fill="#d0903c" opacity="0.23"/><rect x="31" y="130" width="3" height="22" fill="#f2b462" opacity="0.32"/><rect x="31" y="-2" width="3" height="22" fill="#f2b462" opacity="0.32"/><rect x="111" y="96" width="1" height="23" fill="#f2b462" opacity="0.44"/><rect x="40" y="52" width="2" height="23" fill="#d0903c" opacity="0.25"/><rect x="55" y="34" width="3" height="10" fill="#e4b040" opacity="0.49"/><rect x="88" y="80" width="1" height="22" fill="#f2b462" opacity="0.57"/><rect x="55" y="49" width="3" height="6" fill="#f2b462" opacity="0.33"/><rect x="22" y="99" width="1" height="6" fill="#f2b462" opacity="0.58"/><rect x="32" y="103" width="1" height="23" fill="#d0903c" opacity="0.2"/><rect x="51" y="91" width="2" height="14" fill="#f2b462" opacity="0.43"/><rect x="87" y="48" width="2" height="5" fill="#d0903c" opacity="0.21"/><rect x="131" y="123" width="2" height="7" fill="#f2b462" opacity="0.29"/><rect x="44" y="40" width="3" height="12" fill="#e4b040" opacity="0.33"/><rect x="15" y="118" width="1" height="5" fill="#d0903c" opacity="0.28"/><rect x="119" y="131" width="1" height="14" fill="#f2b462" opacity="0.46"/><rect x="119" y="-1" width="1" height="14" fill="#f2b462" opacity="0.46"/><rect x="3" y="10" width="2" height="9" fill="#f2b462" opacity="0.41"/><rect x="94" y="49" width="1" height="22" fill="#f2b462" opacity="0.43"/><rect x="3" y="21" width="1" height="25" fill="#e4b040" opacity="0.57"/><rect x="103" y="48" width="2" height="19" fill="#d0903c" opacity="0.29"/><rect x="66" y="29" width="1" height="26" fill="#d0903c" opacity="0.24"/><rect x="103" y="84" width="1" height="20" fill="#d0903c" opacity="0.39"/><rect x="46" y="52" width="1" height="26" fill="#f2b462" opacity="0.53"/><rect x="77" y="25" width="1" height="3" fill="#e4b040" opacity="0.6"/><rect x="12" y="69" width="1" height="24" fill="#f2b462" opacity="0.33"/><rect x="103" y="46" width="2" height="20" fill="#f2b462" opacity="0.43"/><rect x="127" y="54" width="2" height="25" fill="#f2b462" opacity="0.39"/><rect x="5" y="27" width="1" height="26" fill="#f2b462" opacity="0.41"/><rect x="129" y="50" width="1" height="23" fill="#f2b462" opacity="0.28"/><rect x="64" y="87" width="1" height="20" fill="#d0903c" opacity="0.3"/><rect x="25" y="113" width="2" height="23" fill="#f2b462" opacity="0.46"/><rect x="25" y="-19" width="2" height="23" fill="#f2b462" opacity="0.46"/><rect x="11" y="40" width="1" height="15" fill="#d0903c" opacity="0.24"/><rect x="126" y="14" width="2" height="16" fill="#e4b040" opacity="0.43"/><rect x="102" y="79" width="2" height="14" fill="#d0903c" opacity="0.32"/><rect x="69" y="72" width="2" height="24" fill="#d0903c" opacity="0.27"/><rect x="3" y="62" width="3" height="21" fill="#f2b462" opacity="0.3"/><rect x="99" y="80" width="1" height="26" fill="#f2b462" opacity="0.45"/><rect x="81" y="57" width="1" height="16" fill="#d0903c" opacity="0.26"/><rect x="62" y="25" width="1" height="26" fill="#e4b040" opacity="0.34"/><rect x="62" y="29" width="2" height="4" fill="#d0903c" opacity="0.31"/><rect x="52" y="13" width="3" height="14" fill="#d0903c" opacity="0.23"/><rect x="113" y="106" width="1" height="17" fill="#d0903c" opacity="0.36"/><rect x="107" y="35" width="1" height="12" fill="#d0903c" opacity="0.26"/><rect x="29" y="79" width="2" height="19" fill="#d0903c" opacity="0.29"/><rect x="69" y="48" width="2" height="23" fill="#f2b462" opacity="0.33"/><rect x="63" y="50" width="2" height="24" fill="#f2b462" opacity="0.27"/><rect x="69" y="108" width="1" height="3" fill="#d0903c" opacity="0.23"/><rect x="71" y="22" width="1" height="24" fill="#f2b462" opacity="0.33"/><rect x="95" y="122" width="1" height="14" fill="#f2b462" opacity="0.37"/><rect x="95" y="-10" width="1" height="14" fill="#f2b462" opacity="0.37"/><rect x="34" y="19" width="3" height="6" fill="#f2b462" opacity="0.54"/><rect x="54" y="108" width="1" height="26" fill="#f2b462" opacity="0.53"/><rect x="54" y="-24" width="1" height="26" fill="#f2b462" opacity="0.53"/><rect x="94" y="83" width="1" height="12" fill="#d0903c" opacity="0.39"/><rect x="47" y="94" width="1" height="21" fill="#f2b462" opacity="0.56"/><rect x="20" y="21" width="2" height="16" fill="#d0903c" opacity="0.32"/><rect x="118" y="2" width="1" height="5" fill="#f2b462" opacity="0.57"/><rect x="20" y="77" width="2" height="18" fill="#d0903c" opacity="0.37"/><rect x="72" y="56" width="1" height="14" fill="#d0903c" opacity="0.28"/><rect x="30" y="112" width="1" height="21" fill="#d0903c" opacity="0.43"/><rect x="30" y="-20" width="1" height="21" fill="#d0903c" opacity="0.43"/><rect x="71" y="78" width="1" height="17" fill="#f2b462" opacity="0.39"/><rect x="63" y="92" width="1" height="14" fill="#f2b462" opacity="0.49"/><rect x="99" y="49" width="3" height="26" fill="#d0903c" opacity="0.4"/><rect x="39" y="45" width="3" height="8" fill="#f2b462" opacity="0.41"/><rect x="72" y="5" width="3" height="10" fill="#d0903c" opacity="0.34"/><rect x="75" y="108" width="1" height="5" fill="#d0903c" opacity="0.28"/><rect x="21" y="20" width="1" height="11" fill="#d0903c" opacity="0.42"/><rect x="21" y="36" width="1" height="6" fill="#d0903c" opacity="0.36"/><rect x="62" y="56" width="2" height="18" fill="#d0903c" opacity="0.33"/><rect x="117" y="89" width="1" height="13" fill="#d0903c" opacity="0.28"/><rect x="34" y="124" width="1" height="20" fill="#d0903c" opacity="0.22"/><rect x="34" y="-8" width="1" height="20" fill="#d0903c" opacity="0.22"/><rect x="11" y="89" width="1" height="3" fill="#d0903c" opacity="0.41"/><rect x="118" y="6" width="2" height="19" fill="#f2b462" opacity="0.25"/><rect x="28" y="107" width="1" height="7" fill="#f2b462" opacity="0.31"/><rect x="96" y="42" width="2" height="13" fill="#f2b462" opacity="0.4"/><rect x="74" y="15" width="1" height="18" fill="#f2b462" opacity="0.29"/><rect x="39" y="45" width="3" height="4" fill="#d0903c" opacity="0.2"/><rect x="123" y="9" width="3" height="13" fill="#f2b462" opacity="0.31"/><rect x="55" y="60" width="2" height="22" fill="#d0903c" opacity="0.35"/><rect x="57" y="47" width="1" height="11" fill="#f2b462" opacity="0.57"/><rect x="79" y="122" width="2" height="11" fill="#d0903c" opacity="0.3"/><rect x="79" y="-10" width="2" height="11" fill="#d0903c" opacity="0.3"/><rect x="87" y="23" width="2" height="18" fill="#e4b040" opacity="0.42"/><rect x="55" y="98" width="1" height="19" fill="#d0903c" opacity="0.39"/><rect x="14" y="60" width="2" height="3" fill="#e4b040" opacity="0.57"/><rect x="115" y="63" width="3" height="25" fill="#f2b462" opacity="0.56"/><rect x="106" y="82" width="1" height="7" fill="#f2b462" opacity="0.55"/><rect x="33" y="68" width="2" height="19" fill="#d0903c" opacity="0.24"/><rect x="45" y="52" width="1" height="7" fill="#d0903c" opacity="0.22"/><rect x="69" y="24" width="2" height="18" fill="#d0903c" opacity="0.22"/><rect x="129" y="4" width="1" height="9" fill="#f2b462" opacity="0.57"/><rect x="23" y="112" width="3" height="9" fill="#f2b462" opacity="0.39"/><rect x="126" y="79" width="1" height="13" fill="#f2b462" opacity="0.28"/><rect x="78" y="17" width="1" height="14" fill="#f2b462" opacity="0.3"/><rect x="100" y="118" width="2" height="26" fill="#e4b040" opacity="0.55"/><rect x="100" y="-14" width="2" height="26" fill="#e4b040" opacity="0.55"/><rect x="113" y="96" width="1" height="25" fill="#d0903c" opacity="0.26"/><rect x="29" y="2" width="1" height="26" fill="#f2b462" opacity="0.47"/><rect x="74" y="96" width="2" height="20" fill="#d0903c" opacity="0.44"/><rect x="100" y="22" width="2" height="11" fill="#f2b462" opacity="0.38"/><rect x="28" y="79" width="1" height="11" fill="#d0903c" opacity="0.38"/><rect x="84" y="97" width="1" height="5" fill="#f2b462" opacity="0.47"/><rect x="33" y="45" width="2" height="8" fill="#f2b462" opacity="0.26"/><rect x="118" y="23" width="2" height="6" fill="#f2b462" opacity="0.3"/><rect x="31" y="104" width="1" height="5" fill="#f2b462" opacity="0.54"/><rect x="130" y="52" width="1" height="7" fill="#d0903c" opacity="0.3"/><rect x="84" y="3" width="1" height="26" fill="#f2b462" opacity="0.49"/><rect x="62" y="4" width="2" height="11" fill="#f2b462" opacity="0.37"/><rect x="112" y="96" width="1" height="9" fill="#d0903c" opacity="0.4"/><rect x="26" y="40" width="2" height="11" fill="#d0903c" opacity="0.43"/><rect x="59" y="128" width="1" height="19" fill="#f2b462" opacity="0.5"/><rect x="59" y="-4" width="1" height="19" fill="#f2b462" opacity="0.5"/><rect x="50" y="6" width="2" height="23" fill="#d0903c" opacity="0.39"/><rect x="34" y="122" width="1" height="21" fill="#f2b462" opacity="0.37"/><rect x="34" y="-10" width="1" height="21" fill="#f2b462" opacity="0.37"/><rect x="23" y="92" width="3" height="11" fill="#d0903c" opacity="0.23"/><rect x="34" y="16" width="1" height="20" fill="#e4b040" opacity="0.35"/><rect x="85" y="37" width="2" height="6" fill="#e4b040" opacity="0.3"/><rect x="93" y="92" width="1" height="8" fill="#f2b462" opacity="0.44"/><rect x="19" y="8" width="1" height="15" fill="#f2b462" opacity="0.6"/><rect x="35" y="97" width="1" height="22" fill="#d0903c" opacity="0.4"/><rect x="4" y="51" width="1" height="16" fill="#d0903c" opacity="0.24"/><rect x="98" y="103" width="1" height="8" fill="#f2b462" opacity="0.3"/><rect x="62" y="85" width="2" height="4" fill="#d0903c" opacity="0.21"/><rect x="37" y="127" width="1" height="22" fill="#f2b462" opacity="0.37"/><rect x="37" y="-5" width="1" height="22" fill="#f2b462" opacity="0.37"/><rect x="104" y="72" width="3" height="18" fill="#e4b040" opacity="0.44"/><rect x="104" y="111" width="3" height="6" fill="#d0903c" opacity="0.43"/><rect x="84" y="110" width="2" height="16" fill="#e4b040" opacity="0.4"/><rect x="13" y="110" width="1" height="26" fill="#f2b462" opacity="0.36"/><rect x="13" y="-22" width="1" height="26" fill="#f2b462" opacity="0.36"/><rect x="78" y="17" width="2" height="10" fill="#f2b462" opacity="0.41"/><rect x="128" y="101" width="3" height="4" fill="#d0903c" opacity="0.23"/><rect x="61" y="78" width="2" height="24" fill="#f2b462" opacity="0.33"/><rect x="17" y="94" width="2" height="20" fill="#f2b462" opacity="0.53"/><rect x="56" y="107" width="2" height="21" fill="#f2b462" opacity="0.28"/><rect x="33" y="116" width="1" height="3" fill="#f2b462" opacity="0.5"/><rect x="6" y="44" width="1" height="5" fill="#f2b462" opacity="0.41"/><rect x="101" y="91" width="1" height="25" fill="#d0903c" opacity="0.21"/><rect x="7" y="80" width="1" height="12" fill="#f2b462" opacity="0.3"/><rect x="120" y="51" width="1" height="12" fill="#e4b040" opacity="0.51"/><rect x="15" y="80" width="1" height="14" fill="#e4b040" opacity="0.3"/><rect x="51" y="60" width="2" height="9" fill="#e4b040" opacity="0.59"/><rect x="27" y="80" width="1" height="11" fill="#e4b040" opacity="0.51"/><rect x="34" y="113" width="1" height="16" fill="#f2b462" opacity="0.33"/><rect x="78" y="50" width="1" height="11" fill="#f2b462" opacity="0.33"/><rect x="75" y="69" width="3" height="14" fill="#d0903c" opacity="0.33"/><rect x="29" y="58" width="2" height="12" fill="#e4b040" opacity="0.35"/><rect x="57" y="33" width="1" height="23" fill="#d0903c" opacity="0.32"/><rect x="19" y="18" width="1" height="19" fill="#e4b040" opacity="0.3"/><rect x="72" y="64" width="2" height="16" fill="#d0903c" opacity="0.22"/><rect x="72" y="48" width="3" height="10" fill="#f2b462" opacity="0.51"/><rect x="7" y="38" width="1" height="4" fill="#d0903c" opacity="0.43"/><rect x="98" y="127" width="1" height="4" fill="#f2b462" opacity="0.44"/><rect x="92" y="123" width="1" height="4" fill="#d0903c" opacity="0.33"/><rect x="44" y="42" width="2" height="6" fill="#d0903c" opacity="0.26"/><rect x="112" y="65" width="2" height="25" fill="#d0903c" opacity="0.26"/><rect x="125" y="56" width="2" height="21" fill="#d0903c" opacity="0.27"/><rect x="51" y="13" width="2" height="21" fill="#f2b462" opacity="0.56"/><rect x="83" y="4" width="1" height="22" fill="#d0903c" opacity="0.31"/><rect x="113" y="67" width="2" height="3" fill="#f2b462" opacity="0.57"/><rect x="60" y="37" width="2" height="4" fill="#f2b462" opacity="0.26"/><rect x="80" y="67" width="3" height="21" fill="#d0903c" opacity="0.36"/><rect x="130" y="96" width="1" height="11" fill="#f2b462" opacity="0.42"/><rect x="116" y="80" width="1" height="16" fill="#d0903c" opacity="0.37"/><rect x="10" y="125" width="1" height="22" fill="#e4b040" opacity="0.34"/><rect x="10" y="-7" width="1" height="22" fill="#e4b040" opacity="0.34"/><rect x="116" y="10" width="2" height="3" fill="#f2b462" opacity="0.56"/><rect x="36" y="100" width="1" height="20" fill="#f2b462" opacity="0.4"/><rect x="19" y="58" width="1" height="12" fill="#f2b462" opacity="0.44"/><rect x="61" y="118" width="1" height="5" fill="#e4b040" opacity="0.41"/><rect x="86" y="55" width="2" height="4" fill="#f2b462" opacity="0.45"/><rect x="14" y="87" width="2" height="21" fill="#d0903c" opacity="0.42"/><rect x="45" y="100" width="1" height="9" fill="#f2b462" opacity="0.52"/><rect x="55" y="88" width="1" height="10" fill="#f2b462" opacity="0.44"/><rect x="41" y="52" width="1" height="15" fill="#f2b462" opacity="0.41"/><rect x="78" y="114" width="1" height="18" fill="#e4b040" opacity="0.5"/><rect x="124" y="98" width="1" height="16" fill="#f2b462" opacity="0.49"/><rect x="92" y="4" width="1" height="19" fill="#f2b462" opacity="0.34"/><rect x="100" y="55" width="2" height="11" fill="#f2b462" opacity="0.27"/><rect x="92" y="61" width="1" height="26" fill="#d0903c" opacity="0.23"/><rect x="82" y="98" width="3" height="17" fill="#f2b462" opacity="0.56"/><rect x="83" y="14" width="1" height="12" fill="#f2b462" opacity="0.33"/><rect x="10" y="38" width="1" height="19" fill="#d0903c" opacity="0.21"/><rect x="79" y="108" width="1" height="18" fill="#d0903c" opacity="0.23"/><rect x="66" y="115" width="1" height="24" fill="#f2b462" opacity="0.56"/><rect x="66" y="-17" width="1" height="24" fill="#f2b462" opacity="0.56"/><rect x="71" y="115" width="2" height="15" fill="#f2b462" opacity="0.43"/><rect x="91" y="26" width="1" height="12" fill="#f2b462" opacity="0.46"/><rect x="35" y="6" width="1" height="26" fill="#d0903c" opacity="0.34"/><rect x="76" y="17" width="2" height="9" fill="#d0903c" opacity="0.29"/><rect x="31" y="95" width="3" height="10" fill="#d0903c" opacity="0.26"/><rect x="109" y="100" width="1" height="18" fill="#f2b462" opacity="0.38"/><rect x="84" y="127" width="1" height="25" fill="#f2b462" opacity="0.31"/><rect x="84" y="-5" width="1" height="25" fill="#f2b462" opacity="0.31"/><rect x="103" y="121" width="1" height="8" fill="#f2b462" opacity="0.5"/><rect x="23" y="87" width="2" height="16" fill="#d0903c" opacity="0.32"/><rect x="65" y="78" width="2" height="25" fill="#e4b040" opacity="0.57"/><rect x="30" y="16" width="1" height="15" fill="#f2b462" opacity="0.38"/><rect x="76" y="83" width="1" height="11" fill="#f2b462" opacity="0.26"/><rect x="82" y="76" width="1" height="11" fill="#d0903c" opacity="0.42"/><rect x="120" y="87" width="1" height="14" fill="#f2b462" opacity="0.5"/><rect x="55" y="19" width="3" height="23" fill="#f2b462" opacity="0.44"/><rect x="106" y="70" width="1" height="5" fill="#d0903c" opacity="0.42"/><rect x="97" y="9" width="1" height="7" fill="#d0903c" opacity="0.27"/><rect x="126" y="121" width="1" height="3" fill="#f2b462" opacity="0.32"/><rect x="58" y="56" width="1" height="10" fill="#d0903c" opacity="0.43"/><rect x="100" y="61" width="1" height="20" fill="#d0903c" opacity="0.36"/><rect x="20" y="85" width="2" height="11" fill="#f2b462" opacity="0.56"/><rect x="80" y="53" width="3" height="25" fill="#f2b462" opacity="0.3"/><rect x="49" y="41" width="3" height="8" fill="#f2b462" opacity="0.49"/><rect x="75" y="106" width="1" height="12" fill="#f2b462" opacity="0.48"/><rect x="127" y="63" width="1" height="14" fill="#f2b462" opacity="0.31"/><rect x="131" y="32" width="2" height="5" fill="#e4b040" opacity="0.55"/><rect x="79" y="115" width="1" height="19" fill="#d0903c" opacity="0.32"/><rect x="79" y="-17" width="1" height="19" fill="#d0903c" opacity="0.32"/><rect x="41" y="105" width="2" height="18" fill="#f2b462" opacity="0.34"/><rect x="129" y="100" width="2" height="11" fill="#d0903c" opacity="0.26"/><rect x="83" y="85" width="1" height="9" fill="#d0903c" opacity="0.41"/><rect x="107" y="32" width="2" height="22" fill="#d0903c" opacity="0.27"/><rect x="41" y="51" width="1" height="15" fill="#d0903c" opacity="0.27"/><rect x="47" y="120" width="1" height="21" fill="#d0903c" opacity="0.4"/><rect x="47" y="-12" width="1" height="21" fill="#d0903c" opacity="0.4"/><rect x="34" y="69" width="1" height="16" fill="#f2b462" opacity="0.48"/><rect x="98" y="35" width="2" height="4" fill="#f2b462" opacity="0.6"/><rect x="10" y="73" width="1" height="14" fill="#d0903c" opacity="0.45"/><rect x="30" y="84" width="1" height="3" fill="#d0903c" opacity="0.41"/><rect x="43" y="17" width="1" height="12" fill="#f2b462" opacity="0.55"/><rect x="72" y="100" width="1" height="26" fill="#d0903c" opacity="0.39"/><rect x="99" y="55" width="2" height="20" fill="#f2b462" opacity="0.55"/><rect x="113" y="27" width="1" height="20" fill="#e4b040" opacity="0.38"/><rect x="124" y="30" width="1" height="7" fill="#f2b462" opacity="0.26"/><rect x="36" y="102" width="1" height="11" fill="#f2b462" opacity="0.28"/><rect x="51" y="66" width="1" height="20" fill="#f2b462" opacity="0.27"/><rect x="79" y="20" width="2" height="3" fill="#f2b462" opacity="0.42"/><rect x="51" y="104" width="3" height="18" fill="#f2b462" opacity="0.37"/><rect x="101" y="14" width="2" height="9" fill="#d0903c" opacity="0.36"/><rect x="64" y="48" width="1" height="12" fill="#e4b040" opacity="0.6"/><rect x="113" y="12" width="2" height="8" fill="#e4b040" opacity="0.58"/><rect x="30" y="19" width="2" height="11" fill="#f2b462" opacity="0.51"/><rect x="79" y="131" width="1" height="17" fill="#f2b462" opacity="0.32"/><rect x="79" y="-1" width="1" height="17" fill="#f2b462" opacity="0.32"/><rect x="93" y="67" width="1" height="10" fill="#d0903c" opacity="0.38"/><rect x="102" y="25" width="1" height="18" fill="#f2b462" opacity="0.5"/><rect x="64" y="6" width="2" height="3" fill="#d0903c" opacity="0.26"/><rect x="99" y="94" width="2" height="19" fill="#d0903c" opacity="0.4"/><rect x="93" y="115" width="2" height="14" fill="#f2b462" opacity="0.27"/><rect x="82" y="24" width="2" height="11" fill="#f2b462" opacity="0.51"/><rect x="54" y="33" width="1" height="20" fill="#f2b462" opacity="0.32"/><rect x="88" y="39" width="1" height="7" fill="#f2b462" opacity="0.31"/><rect x="5" y="102" width="1" height="19" fill="#f2b462" opacity="0.28"/><rect x="52" y="44" width="1" height="13" fill="#f2b462" opacity="0.46"/><rect x="82" y="121" width="1" height="10" fill="#d0903c" opacity="0.4"/><rect x="45" y="69" width="3" height="5" fill="#d0903c" opacity="0.44"/><rect x="82" y="91" width="1" height="19" fill="#e4b040" opacity="0.34"/><rect x="96" y="14" width="2" height="9" fill="#d0903c" opacity="0.29"/><rect x="112" y="108" width="3" height="19" fill="#e4b040" opacity="0.58"/><rect x="31" y="116" width="3" height="16" fill="#d0903c" opacity="0.3"/><rect x="98" y="58" width="2" height="15" fill="#d0903c" opacity="0.34"/><rect x="131" y="115" width="1" height="17" fill="#f2b462" opacity="0.27"/><rect x="13" y="38" width="1" height="20" fill="#d0903c" opacity="0.45"/><rect x="80" y="120" width="1" height="20" fill="#f2b462" opacity="0.55"/><rect x="80" y="-12" width="1" height="20" fill="#f2b462" opacity="0.55"/><rect x="32" y="125" width="3" height="6" fill="#f2b462" opacity="0.54"/><rect x="36" y="29" width="3" height="6" fill="#d0903c" opacity="0.45"/><rect x="16" y="9" width="1" height="25" fill="#f2b462" opacity="0.43"/><rect x="89" y="53" width="1" height="20" fill="#f2b462" opacity="0.4"/><rect x="125" y="61" width="1" height="5" fill="#f2b462" opacity="0.4"/><rect x="125" y="18" width="1" height="18" fill="#e4b040" opacity="0.53"/><rect x="16" y="38" width="3" height="14" fill="#f2b462" opacity="0.37"/><rect x="88" y="56" width="3" height="12" fill="#f2b462" opacity="0.31"/><rect x="99" y="119" width="1" height="18" fill="#f2b462" opacity="0.6"/><rect x="99" y="-13" width="1" height="18" fill="#f2b462" opacity="0.6"/><rect x="52" y="80" width="2" height="26" fill="#e4b040" opacity="0.47"/><rect x="110" y="3" width="1" height="13" fill="#d0903c" opacity="0.41"/><rect x="71" y="53" width="2" height="25" fill="#f2b462" opacity="0.52"/><rect x="43" y="119" width="2" height="4" fill="#f2b462" opacity="0.29"/><rect x="88" y="91" width="2" height="12" fill="#f2b462" opacity="0.6"/><rect x="52" y="92" width="2" height="12" fill="#d0903c" opacity="0.25"/><rect x="18" y="68" width="2" height="16" fill="#f2b462" opacity="0.46"/><rect x="71" y="34" width="1" height="19" fill="#f2b462" opacity="0.28"/><rect x="131" y="106" width="2" height="10" fill="#d0903c" opacity="0.23"/><rect x="31" y="73" width="3" height="5" fill="#d0903c" opacity="0.31"/><rect x="122" y="50" width="1" height="26" fill="#f2b462" opacity="0.33"/><rect x="16" y="107" width="1" height="13" fill="#f2b462" opacity="0.4"/><rect x="68" y="3" width="1" height="24" fill="#d0903c" opacity="0.2"/><rect x="95" y="64" width="1" height="15" fill="#f2b462" opacity="0.37"/><rect x="26" y="25" width="2" height="17" fill="#e4b040" opacity="0.33"/><rect x="93" y="95" width="1" height="3" fill="#d0903c" opacity="0.37"/><rect x="88" y="5" width="3" height="24" fill="#d0903c" opacity="0.32"/><rect x="92" y="118" width="1" height="19" fill="#f2b462" opacity="0.48"/><rect x="92" y="-14" width="1" height="19" fill="#f2b462" opacity="0.48"/><rect x="15" y="5" width="1" height="15" fill="#f2b462" opacity="0.33"/><rect x="28" y="17" width="1" height="17" fill="#d0903c" opacity="0.4"/><rect x="55" y="53" width="2" height="18" fill="#f2b462" opacity="0.3"/><rect x="101" y="21" width="1" height="3" fill="#f2b462" opacity="0.48"/><rect x="64" y="121" width="2" height="6" fill="#f2b462" opacity="0.3"/><rect x="94" y="93" width="3" height="3" fill="#f2b462" opacity="0.39"/><rect x="28" y="24" width="3" height="12" fill="#e4b040" opacity="0.47"/><rect x="17" y="60" width="2" height="7" fill="#d0903c" opacity="0.33"/><rect x="78" y="90" width="1" height="10" fill="#f2b462" opacity="0.39"/><rect x="13" y="115" width="1" height="8" fill="#d0903c" opacity="0.31"/><rect x="26" y="128" width="3" height="7" fill="#f2b462" opacity="0.45"/><rect x="26" y="-4" width="3" height="7" fill="#f2b462" opacity="0.45"/><rect x="44" y="30" width="1" height="16" fill="#d0903c" opacity="0.26"/><rect x="28" y="96" width="2" height="8" fill="#f2b462" opacity="0.47"/><rect x="103" y="126" width="1" height="12" fill="#e4b040" opacity="0.46"/><rect x="103" y="-6" width="1" height="12" fill="#e4b040" opacity="0.46"/><rect x="11" y="106" width="1" height="12" fill="#f2b462" opacity="0.34"/><rect x="28" y="107" width="2" height="13" fill="#e4b040" opacity="0.36"/><rect x="35" y="128" width="2" height="6" fill="#f2b462" opacity="0.35"/><rect x="35" y="-4" width="2" height="6" fill="#f2b462" opacity="0.35"/><rect x="66" y="94" width="1" height="5" fill="#f2b462" opacity="0.42"/><rect x="91" y="110" width="2" height="13" fill="#d0903c" opacity="0.21"/><rect x="15" y="97" width="1" height="20" fill="#f2b462" opacity="0.54"/><rect x="25" y="95" width="2" height="4" fill="#f2b462" opacity="0.42"/><rect x="58" y="124" width="2" height="26" fill="#f2b462" opacity="0.39"/><rect x="58" y="-8" width="2" height="26" fill="#f2b462" opacity="0.39"/><rect x="26" y="91" width="1" height="10" fill="#f2b462" opacity="0.46"/><rect x="94" y="77" width="3" height="9" fill="#d0903c" opacity="0.35"/><rect x="80" y="127" width="1" height="6" fill="#d0903c" opacity="0.39"/><rect x="80" y="-5" width="1" height="6" fill="#d0903c" opacity="0.39"/><rect x="13" y="23" width="3" height="9" fill="#f2b462" opacity="0.34"/><rect x="108" y="95" width="2" height="15" fill="#f2b462" opacity="0.45"/><rect x="24" y="101" width="1" height="10" fill="#d0903c" opacity="0.28"/><rect x="81" y="39" width="1" height="12" fill="#d0903c" opacity="0.21"/><rect x="125" y="101" width="1" height="22" fill="#f2b462" opacity="0.3"/><rect x="87" y="5" width="2" height="22" fill="#e4b040" opacity="0.53"/><rect x="1" y="122" width="3" height="16" fill="#f2b462" opacity="0.47"/><rect x="1" y="-10" width="3" height="16" fill="#f2b462" opacity="0.47"/><rect x="19" y="21" width="1" height="17" fill="#d0903c" opacity="0.24"/><rect x="114" y="111" width="2" height="6" fill="#f2b462" opacity="0.56"/><rect x="18" y="29" width="3" height="14" fill="#d0903c" opacity="0.34"/><rect x="28" y="30" width="2" height="15" fill="#f2b462" opacity="0.58"/><rect x="29" y="54" width="3" height="6" fill="#f2b462" opacity="0.44"/><rect x="31" y="70" width="1" height="18" fill="#f2b462" opacity="0.56"/><rect x="96" y="126" width="1" height="18" fill="#f2b462" opacity="0.53"/><rect x="96" y="-6" width="1" height="18" fill="#f2b462" opacity="0.53"/><rect x="130" y="123" width="3" height="6" fill="#d0903c" opacity="0.41"/><rect x="82" y="3" width="1" height="14" fill="#d0903c" opacity="0.36"/><rect x="96" y="99" width="2" height="17" fill="#d0903c" opacity="0.41"/><rect x="91" y="37" width="3" height="18" fill="#d0903c" opacity="0.3"/><rect x="23" y="125" width="2" height="10" fill="#d0903c" opacity="0.29"/><rect x="23" y="-7" width="2" height="10" fill="#d0903c" opacity="0.29"/><rect x="105" y="11" width="2" height="11" fill="#e4b040" opacity="0.54"/><rect x="65" y="62" width="1" height="25" fill="#f2b462" opacity="0.57"/><rect x="16" y="46" width="2" height="16" fill="#e4b040" opacity="0.44"/><rect x="124" y="59" width="1" height="8" fill="#d0903c" opacity="0.23"/><rect x="78" y="38" width="2" height="4" fill="#e4b040" opacity="0.41"/><rect x="40" y="125" width="2" height="13" fill="#d0903c" opacity="0.31"/><rect x="40" y="-7" width="2" height="13" fill="#d0903c" opacity="0.31"/><rect x="91" y="77" width="3" height="6" fill="#f2b462" opacity="0.3"/><rect x="51" y="88" width="3" height="6" fill="#f2b462" opacity="0.32"/><rect x="43" y="83" width="1" height="14" fill="#f2b462" opacity="0.53"/><rect x="74" y="67" width="2" height="6" fill="#f2b462" opacity="0.26"/><rect x="64" y="75" width="2" height="12" fill="#f2b462" opacity="0.3"/><rect x="124" y="69" width="1" height="3" fill="#f2b462" opacity="0.35"/><rect x="130" y="99" width="1" height="8" fill="#d0903c" opacity="0.34"/><rect x="33" y="22" width="2" height="20" fill="#d0903c" opacity="0.24"/><rect x="66" y="13" width="1" height="16" fill="#e4b040" opacity="0.41"/><rect x="59" y="115" width="1" height="24" fill="#f2b462" opacity="0.51"/><rect x="59" y="-17" width="1" height="24" fill="#f2b462" opacity="0.51"/><rect x="129" y="89" width="1" height="10" fill="#f2b462" opacity="0.44"/><rect x="18" y="0" width="1" height="6" fill="#e4b040" opacity="0.59"/><rect x="49" y="79" width="1" height="14" fill="#e4b040" opacity="0.32"/><rect x="17" y="7" width="1" height="16" fill="#d0903c" opacity="0.45"/><rect x="19" y="47" width="1" height="5" fill="#d0903c" opacity="0.29"/><rect x="127" y="26" width="1" height="16" fill="#f2b462" opacity="0.32"/><rect x="124" y="22" width="1" height="7" fill="#e4b040" opacity="0.38"/><rect x="56" y="69" width="2" height="7" fill="#e4b040" opacity="0.58"/><rect x="39" y="109" width="3" height="3" fill="#d0903c" opacity="0.4"/><rect x="80" y="22" width="1" height="19" fill="#f2b462" opacity="0.57"/><rect x="27" y="76" width="1" height="12" fill="#e4b040" opacity="0.31"/><rect x="8" y="47" width="1" height="25" fill="#d0903c" opacity="0.41"/><rect x="21" y="95" width="1" height="5" fill="#e4b040" opacity="0.36"/><rect x="101" y="59" width="3" height="16" fill="#f2b462" opacity="0.33"/><rect x="100" y="61" width="1" height="11" fill="#f2b462" opacity="0.38"/></pattern></defs><rect x="87" y="132" width="424" height="424" fill="#808080"/><rect x="84" y="129" width="424" height="424" fill="url(#wood)"/><rect x="84" y="129" width="424" height="1" fill="#d89a68" opacity="0.8"/><rect x="84" y="129" width="1" height="424" fill="#d89a68" opacity="0.6"/><rect x="97" y="143" width="1" height="397" fill="#f4b890" opacity="0.35"/><rect x="99" y="143" width="1" height="397" fill="#f4b890" opacity="0.35"/><rect x="98" y="142" width="397" height="1" fill="#f4b890" opacity="0.35"/><rect x="98" y="144" width="397" height="1" fill="#f4b890" opacity="0.35"/><rect x="119" y="143" width="1" height="397" fill="#f4b890" opacity="0.35"/><rect x="121" y="143" width="1" height="397" fill="#f4b890" opacity="0.35"/><rect x="98" y="164" width="397" height="1" fill="#f4b890" opacity="0.35"/><rect x="98" y="166" width="397" height="1" fill="#f4b890" opacity="0.35"/><rect x="141" y="143" width="1" height="397" fill="#f4b890" opacity="0.35"/><rect x="143" y="143" width="1" height="397" fill="#f4b890" opacity="0.35"/><rect x="98" y="186" width="397" height="1" fill="#f4b890" opacity="0.35"/><rect x="98" y="188" width="397" height="1" fill="#f4b890" opacity="0.35"/><rect x="163" y="143" width="1" height="397" fill="#f4b890" opacity="0.35"/><rect x="165" y="143" width="1" height="397" fill="#f4b890" opacity="0.35"/><rect x="98" y="208" width="397" height="1" fill="#f4b890" opacity="0.35"/><rect x="98" y="210" width="397" height="1" fill="#f4b890" opacity="0.35"/><rect x="185" y="143" width="1" height="397" fill="#f4b890" opacity="0.35"/><rect x="187" y="143" width="1" height="397" fill="#f4b890" opacity="0.35"/><rect x="98" y="230" width="397" height="1" fill="#f4b890" opacity="0.35"/><rect x="98" y="232" width="397" height="1" fill="#f4b890" opacity="0.35"/><rect x="207" y="143" width="1" height="397" fill="#f4b890" opacity="0.35"/><rect x="209" y="143" width="1" height="397" fill="#f4b890" opacity="0.35"/><rect x="98" y="252" width="397" height="1" fill="#f4b890" opacity="0.35"/><rect x="98" y="254" width="397" height="1" fill="#f4b890" opacity="0.35"/><rect x="229" y="143" width="1" height="397" fill="#f4b890" opacity="0.35"/><rect x="231" y="143" width="1" height="397" fill="#f4b890" opacity="0.35"/><rect x="98" y="274" width="397" height="1" fill="#f4b890" opacity="0.35"/><rect x="98" y="276" width="397" height="1" fill="#f4b890" opacity="0.35"/><rect x="251" y="143" width="1" height="397" fill="#f4b890" opacity="0.35"/><rect x="253" y="143" width="1" height="397" fill="#f4b890" opacity="0.35"/><rect x="98" y="296" width="397" height="1" fill="#f4b890" opacity="0.35"/><rect x="98" y="298" width="397" height="1" fill="#f4b890" opacity="0.35"/><rect x="273" y="143" width="1" height="397" fill="#f4b890" opacity="0.35"/><rect x="275" y="143" width="1" height="397" fill="#f4b890" opacity="0.35"/><rect x="98" y="318" width="397" height="1" fill="#f4b890" opacity="0.35"/><rect x="98" y="320" width="397" height="1" fill="#f4b890" opacity="0.35"/><rect x="295" y="143" width="1" height="397" fill="#f4b890" opacity="0.35"/><rect x="297" y="143" width="1" height="397" fill="#f4b890" opacity="0.35"/><rect x="98" y="340" width="397" height="1" fill="#f4b890" opacity="0.35"/><rect x="98" y="342" width="397" height="1" fill="#f4b890" opacity="0.35"/><rect x="317" y="143" width="1" height="397" fill="#f4b890" opacity="0.35"/><rect x="319" y="143" width="1" height="397" fill="#f4b890" opacity="0.35"/><rect x="98" y="362" width="397" height="1" fill="#f4b890" opacity="0.35"/><rect x="98" y="364" width="397" height="1" fill="#f4b890" opacity="0.35"/><rect x="339" y="143" width="1" height="397" fill="#f4b890" opacity="0.35"/><rect x="341" y="143" width="1" height="397" fill="#f4b890" opacity="0.35"/><rect x="98" y="384" width="397" height="1" fill="#f4b890" opacity="0.35"/><rect x="98" y="386" width="397" height="1" fill="#f4b890" opacity="0.35"/><rect x="361" y="143" width="1" height="397" fill="#f4b890" opacity="0.35"/><rect x="363" y="143" width="1" height="397" fill="#f4b890" opacity="0.35"/><rect x="98" y="406" width="397" height="1" fill="#f4b890" opacity="0.35"/><rect x="98" y="408" width="397" height="1" fill="#f4b890" opacity="0.35"/><rect x="383" y="143" width="1" height="397" fill="#f4b890" opacity="0.35"/><rect x="385" y="143" width="1" height="397" fill="#f4b890" opacity="0.35"/><rect x="98" y="428" width="397" height="1" fill="#f4b890" opacity="0.35"/><rect x="98" y="430" width="397" height="1" fill="#f4b890" opacity="0.35"/><rect x="405" y="143" width="1" height="397" fill="#f4b890" opacity="0.35"/><rect x="407" y="143" width="1" height="397" fill="#f4b890" opacity="0.35"/><rect x="98" y="450" width="397" height="1" fill="#f4b890" opacity="0.35"/><rect x="98" y="452" width="397" height="1" fill="#f4b890" opacity="0.35"/><rect x="427" y="143" width="1" height="397" fill="#f4b890" opacity="0.35"/><rect x="429" y="143" width="1" height="397" fill="#f4b890" opacity="0.35"/><rect x="98" y="472" width="397" height="1" fill="#f4b890" opacity="0.35"/><rect x="98" y="474" width="397" height="1" fill="#f4b890" opacity="0.35"/><rect x="449" y="143" width="1" height="397" fill="#f4b890" opacity="0.35"/><rect x="451" y="143" width="1" height="397" fill="#f4b890" opacity="0.35"/><rect x="98" y="494" width="397" height="1" fill="#f4b890" opacity="0.35"/><rect x="98" y="496" width="397" height="1" fill="#f4b890" opacity="0.35"/><rect x="471" y="143" width="1" height="397" fill="#f4b890" opacity="0.35"/><rect x="473" y="143" width="1" height="397" fill="#f4b890" opacity="0.35"/><rect x="98" y="516" width="397" height="1" fill="#f4b890" opacity="0.35"/><rect x="98" y="518" width="397" height="1" fill="#f4b890" opacity="0.35"/><rect x="493" y="143" width="1" height="397" fill="#f4b890" opacity="0.35"/><rect x="495" y="143" width="1" height="397" fill="#f4b890" opacity="0.35"/><rect x="98" y="538" width="397" height="1" fill="#f4b890" opacity="0.35"/><rect x="98" y="540" width="397" height="1" fill="#f4b890" opacity="0.35"/><line x1="98.5" y1="143" x2="98.5" y2="540" stroke="#340810" stroke-width="1.1"/><line x1="98" y1="143.5" x2="495" y2="143.5" stroke="#340810" stroke-width="1.1"/><line x1="120.5" y1="143" x2="120.5" y2="540" stroke="#340810" stroke-width="1.1"/><line x1="98" y1="165.5" x2="495" y2="165.5" stroke="#340810" stroke-width="1.1"/><line x1="142.5" y1="143" x2="142.5" y2="540" stroke="#340810" stroke-width="1.1"/><line x1="98" y1="187.5" x2="495" y2="187.5" stroke="#340810" stroke-width="1.1"/><line x1="164.5" y1="143" x2="164.5" y2="540" stroke="#340810" stroke-width="1.1"/><line x1="98" y1="209.5" x2="495" y2="209.5" stroke="#340810" stroke-width="1.1"/><line x1="186.5" y1="143" x2="186.5" y2="540" stroke="#340810" stroke-width="1.1"/><line x1="98" y1="231.5" x2="495" y2="231.5" stroke="#340810" stroke-width="1.1"/><line x1="208.5" y1="143" x2="208.5" y2="540" stroke="#340810" stroke-width="1.1"/><line x1="98" y1="253.5" x2="495" y2="253.5" stroke="#340810" stroke-width="1.1"/><line x1="230.5" y1="143" x2="230.5" y2="540" stroke="#340810" stroke-width="1.1"/><line x1="98" y1="275.5" x2="495" y2="275.5" stroke="#340810" stroke-width="1.1"/><line x1="252.5" y1="143" x2="252.5" y2="540" stroke="#340810" stroke-width="1.1"/><line x1="98" y1="297.5" x2="495" y2="297.5" stroke="#340810" stroke-width="1.1"/><line x1="274.5" y1="143" x2="274.5" y2="540" stroke="#340810" stroke-width="1.1"/><line x1="98" y1="319.5" x2="495" y2="319.5" stroke="#340810" stroke-width="1.1"/><line x1="296.5" y1="143" x2="296.5" y2="540" stroke="#340810" stroke-width="1.1"/><line x1="98" y1="341.5" x2="495" y2="341.5" stroke="#340810" stroke-width="1.1"/><line x1="318.5" y1="143" x2="318.5" y2="540" stroke="#340810" stroke-width="1.1"/><line x1="98" y1="363.5" x2="495" y2="363.5" stroke="#340810" stroke-width="1.1"/><line x1="340.5" y1="143" x2="340.5" y2="540" stroke="#340810" stroke-width="1.1"/><line x1="98" y1="385.5" x2="495" y2="385.5" stroke="#340810" stroke-width="1.1"/><line x1="362.5" y1="143" x2="362.5" y2="540" stroke="#340810" stroke-width="1.1"/><line x1="98" y1="407.5" x2="495" y2="407.5" stroke="#340810" stroke-width="1.1"/><line x1="384.5" y1="143" x2="384.5" y2="540" stroke="#340810" stroke-width="1.1"/><line x1="98" y1="429.5" x2="495" y2="429.5" stroke="#340810" stroke-width="1.1"/><line x1="406.5" y1="143" x2="406.5" y2="540" stroke="#340810" stroke-width="1.1"/><line x1="98" y1="451.5" x2="495" y2="451.5" stroke="#340810" stroke-width="1.1"/><line x1="428.5" y1="143" x2="428.5" y2="540" stroke="#340810" stroke-width="1.1"/><line x1="98" y1="473.5" x2="495" y2="473.5" stroke="#340810" stroke-width="1.1"/><line x1="450.5" y1="143" x2="450.5" y2="540" stroke="#340810" stroke-width="1.1"/><line x1="98" y1="495.5" x2="495" y2="495.5" stroke="#340810" stroke-width="1.1"/><line x1="472.5" y1="143" x2="472.5" y2="540" stroke="#340810" stroke-width="1.1"/><line x1="98" y1="517.5" x2="495" y2="517.5" stroke="#340810" stroke-width="1.1"/><line x1="494.5" y1="143" x2="494.5" y2="540" stroke="#340810" stroke-width="1.1"/><line x1="98" y1="539.5" x2="495" y2="539.5" stroke="#340810" stroke-width="1.1"/><circle cx="164.5" cy="209.5" r="2.7" fill="#120600"/><circle cx="164.5" cy="341.5" r="2.7" fill="#120600"/><circle cx="164.5" cy="473.5" r="2.7" fill="#120600"/><circle cx="296.5" cy="209.5" r="2.7" fill="#120600"/><circle cx="296.5" cy="341.5" r="2.7" fill="#120600"/><circle cx="296.5" cy="473.5" r="2.7" fill="#120600"/><circle cx="428.5" cy="209.5" r="2.7" fill="#120600"/><circle cx="428.5" cy="341.5" r="2.7" fill="#120600"/><circle cx="428.5" cy="473.5" r="2.7" fill="#120600"/><rect x="421" y="474" width="87" height="79" fill="url(#wood)"/><rect x="421" y="476" width="3" height="77" fill="#f8c060" opacity="0.44"/><rect x="428" y="476" width="4" height="77" fill="#d08828" opacity="0.33"/><rect x="434" y="476" width="1" height="77" fill="#d08828" opacity="0.43"/><rect x="435" y="476" width="1" height="77" fill="#f8c060" opacity="0.65"/><rect x="436" y="476" width="2" height="77" fill="#d08828" opacity="0.34"/><rect x="438" y="476" width="1" height="77" fill="#d08828" opacity="0.3"/><rect x="440" y="476" width="2" height="77" fill="#f8c060" opacity="0.62"/><rect x="442" y="476" width="1" height="77" fill="#d08828" opacity="0.31"/><rect x="443" y="476" width="1" height="77" fill="#f8c060" opacity="0.65"/><rect x="446" y="476" width="2" height="77" fill="#f8c060" opacity="0.38"/><rect x="448" y="476" width="4" height="77" fill="#d08828" opacity="0.25"/><rect x="452" y="476" width="4" height="77" fill="#f8c060" opacity="0.69"/><rect x="456" y="476" width="2" height="77" fill="#f8c060" opacity="0.44"/><rect x="459" y="476" width="2" height="77" fill="#f8c060" opacity="0.42"/><rect x="461" y="476" width="3" height="77" fill="#d08828" opacity="0.35"/><rect x="464" y="476" width="4" height="77" fill="#f8c060" opacity="0.42"/><rect x="468" y="476" width="2" height="77" fill="#d08828" opacity="0.28"/><rect x="470" y="476" width="2" height="77" fill="#d08828" opacity="0.24"/><rect x="477" y="476" width="1" height="77" fill="#d08828" opacity="0.3"/><rect x="478" y="476" width="2" height="77" fill="#d08828" opacity="0.2"/><rect x="480" y="476" width="1" height="77" fill="#d08828" opacity="0.36"/><rect x="481" y="476" width="1" height="77" fill="#f8c060" opacity="0.4"/><rect x="482" y="476" width="2" height="77" fill="#f8c060" opacity="0.44"/><rect x="484" y="476" width="3" height="77" fill="#f8c060" opacity="0.49"/><rect x="487" y="476" width="3" height="77" fill="#d08828" opacity="0.4"/><rect x="490" y="476" width="2" height="77" fill="#f8c060" opacity="0.68"/><rect x="492" y="476" width="1" height="77" fill="#f8c060" opacity="0.51"/><rect x="495" y="476" width="2" height="77" fill="#f8c060" opacity="0.58"/><rect x="497" y="476" width="1" height="77" fill="#f8c060" opacity="0.43"/><rect x="499" y="476" width="4" height="77" fill="#f8c060" opacity="0.58"/><rect x="503" y="476" width="2" height="77" fill="#f8c060" opacity="0.32"/><rect x="505" y="476" width="3" height="77" fill="#d08828" opacity="0.3"/><rect x="508" y="476" width="4" height="71" fill="#808080"/><rect x="512" y="474" width="20" height="80" fill="#fff"/><rect x="421" y="474" width="91" height="2" fill="#fffce8"/><rect x="427" y="476" width="3" height="71" fill="#4a2808"/><rect x="428" y="476" width="1" height="71" fill="#100400"/><rect x="450" y="476" width="1" height="71" fill="#340810"/><rect x="472" y="476" width="1" height="71" fill="#340810"/><rect x="494" y="476" width="1" height="71" fill="#340810"/><rect x="520" y="476" width="1" height="71" fill="#000"/></svg>
<div class="a lbl" style="left:87px;top:114px">A</div>
<div class="a lbl" style="left:87px;top:557px">A</div>
<div class="a lbl" style="left:109px;top:114px">B</div>
<div class="a lbl" style="left:109px;top:557px">B</div>
<div class="a lbl" style="left:131px;top:114px">C</div>
<div class="a lbl" style="left:131px;top:557px">C</div>
<div class="a lbl" style="left:153px;top:114px">D</div>
<div class="a lbl" style="left:153px;top:557px">D</div>
<div class="a lbl" style="left:175px;top:114px">E</div>
<div class="a lbl" style="left:175px;top:557px">E</div>
<div class="a lbl" style="left:197px;top:114px">F</div>
<div class="a lbl" style="left:197px;top:557px">F</div>
<div class="a lbl" style="left:219px;top:114px">G</div>
<div class="a lbl" style="left:219px;top:557px">G</div>
<div class="a lbl" style="left:241px;top:114px">H</div>
<div class="a lbl" style="left:241px;top:557px">H</div>
<div class="a lbl" style="left:263px;top:114px">J</div>
<div class="a lbl" style="left:263px;top:557px">J</div>
<div class="a lbl" style="left:285px;top:114px">K</div>
<div class="a lbl" style="left:285px;top:557px">K</div>
<div class="a lbl" style="left:307px;top:114px">L</div>
<div class="a lbl" style="left:307px;top:557px">L</div>
<div class="a lbl" style="left:329px;top:114px">M</div>
<div class="a lbl" style="left:329px;top:557px">M</div>
<div class="a lbl" style="left:351px;top:114px">N</div>
<div class="a lbl" style="left:351px;top:557px">N</div>
<div class="a lbl" style="left:373px;top:114px">O</div>
<div class="a lbl" style="left:373px;top:557px">O</div>
<div class="a lbl" style="left:395px;top:114px">P</div>
<div class="a lbl" style="left:395px;top:557px">P</div>
<div class="a lbl" style="left:417px;top:114px">Q</div>
<div class="a lbl" style="left:417px;top:557px">Q</div>
<div class="a lbl" style="left:439px;top:114px">R</div>
<div class="a lbl" style="left:439px;top:557px">R</div>
<div class="a lbl" style="left:461px;top:114px">S</div>
<div class="a lbl" style="left:461px;top:557px">S</div>
<div class="a lbl" style="left:483px;top:114px">T</div>
<div class="a lbl" style="left:483px;top:557px">T</div>
<div class="a rl" style="left:61px;top:136px;text-align:center">19</div>
<div class="a rl" style="left:504px;top:136px;text-align:center">19</div>
<div class="a rl" style="left:61px;top:158px;text-align:center">18</div>
<div class="a rl" style="left:504px;top:158px;text-align:center">18</div>
<div class="a rl" style="left:61px;top:180px;text-align:center">17</div>
<div class="a rl" style="left:504px;top:180px;text-align:center">17</div>
<div class="a rl" style="left:61px;top:202px;text-align:center">16</div>
<div class="a rl" style="left:504px;top:202px;text-align:center">16</div>
<div class="a rl" style="left:61px;top:224px;text-align:center">15</div>
<div class="a rl" style="left:504px;top:224px;text-align:center">15</div>
<div class="a rl" style="left:61px;top:246px;text-align:center">14</div>
<div class="a rl" style="left:504px;top:246px;text-align:center">14</div>
<div class="a rl" style="left:61px;top:268px;text-align:center">13</div>
<div class="a rl" style="left:504px;top:268px;text-align:center">13</div>
<div class="a rl" style="left:61px;top:290px;text-align:center">12</div>
<div class="a rl" style="left:504px;top:290px;text-align:center">12</div>
<div class="a rl" style="left:61px;top:312px;text-align:center">11</div>
<div class="a rl" style="left:504px;top:312px;text-align:center">11</div>
<div class="a rl" style="left:61px;top:334px;text-align:center">10</div>
<div class="a rl" style="left:504px;top:334px;text-align:center">10</div>
<div class="a rl" style="left:61px;top:356px;text-align:center">9</div>
<div class="a rl" style="left:504px;top:356px;text-align:center">9</div>
<div class="a rl" style="left:61px;top:378px;text-align:center">8</div>
<div class="a rl" style="left:504px;top:378px;text-align:center">8</div>
<div class="a rl" style="left:61px;top:400px;text-align:center">7</div>
<div class="a rl" style="left:504px;top:400px;text-align:center">7</div>
<div class="a rl" style="left:61px;top:422px;text-align:center">6</div>
<div class="a rl" style="left:504px;top:422px;text-align:center">6</div>
<div class="a rl" style="left:61px;top:444px;text-align:center">5</div>
<div class="a rl" style="left:504px;top:444px;text-align:center">5</div>
<div class="a rl" style="left:61px;top:466px;text-align:center">4</div>
<div class="a rl" style="left:504px;top:466px;height:9px;overflow:hidden;text-align:center">4</div>
<div class="a rl" style="left:61px;top:488px;text-align:center">3</div>
<div class="a rl" style="left:61px;top:510px;text-align:center">2</div>
<div class="a rl" style="left:61px;top:532px;text-align:center">1</div>
<div class="a" style="left:4px;top:577px;width:427px;height:18px;border-top:1px solid #c8c5b4;border-right:1px solid #c8c5b4"></div>
<div class="a" style="left:432px;top:577px;width:108px;height:18px;border:1px solid #c8c5b4;border-bottom:0"></div>
<div class="a" style="left:542px;top:577px;width:127px;height:18px;border:1px solid #c8c5b4;border-bottom:0"></div>
<div class="a" style="left:670px;top:577px;width:126px;height:18px;border-top:1px solid #c8c5b4;border-left:1px solid #c8c5b4"></div>
<svg class="a" style="left:783px;top:583px" width="12" height="12" viewBox="0 0 12 12"><rect x="8" y="2" width="2" height="2" fill="#b8b4a4"/><rect x="5" y="5" width="2" height="2" fill="#b8b4a4"/><rect x="8" y="5" width="2" height="2" fill="#b8b4a4"/><rect x="2" y="8" width="2" height="2" fill="#b8b4a4"/><rect x="5" y="8" width="2" height="2" fill="#b8b4a4"/><rect x="8" y="8" width="2" height="2" fill="#b8b4a4"/></svg>
<div class="a stat" style="left:8px;top:579px">按</div>
<div class="a stat" style="left:26px;top:579px;font-family:'Liberation Mono',monospace">F1</div>
<div class="a stat" style="left:44px;top:579px">以得到帮助信息</div>
<div class="a stat" style="left:436px;top:579px">死子：黑</div>
<div class="a stat" style="left:490px;top:579px">0</div>
<div class="a stat" style="left:503px;top:579px">白</div>
<div class="a stat" style="left:520px;top:579px">0</div>
<div class="a stat" style="left:675px;top:579px">下一步：黑</div></body></html>
